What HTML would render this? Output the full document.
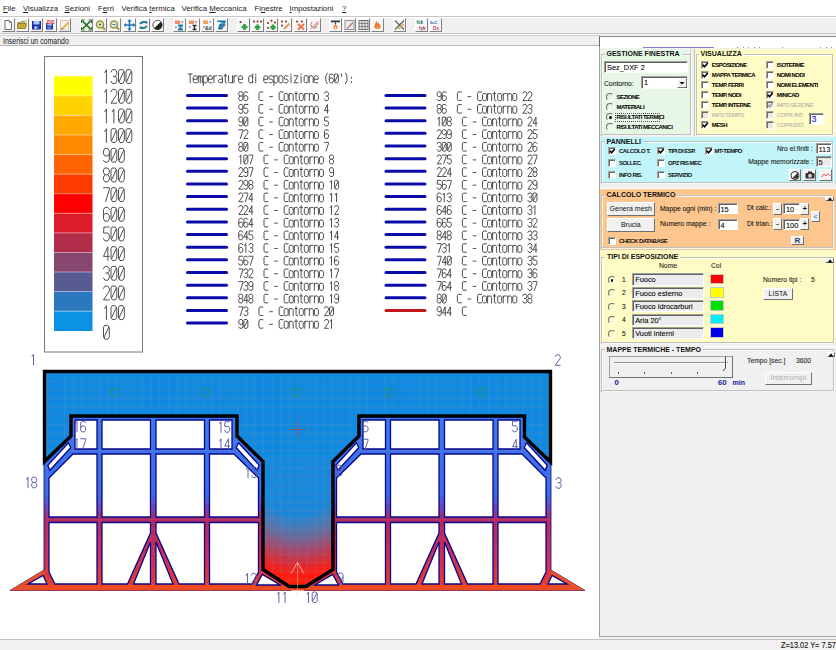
<!DOCTYPE html>
<html><head><meta charset="utf-8"><style>
*{margin:0;padding:0;box-sizing:border-box}
html,body{width:836px;height:650px;overflow:hidden;background:#f0f0f0;font-family:"Liberation Sans",sans-serif;position:relative}
.a{position:absolute}
#menubar{left:0;top:0;width:836px;height:17px;background:#fff;border-bottom:1px solid #c8c8c8}
.mi{position:absolute;top:3.5px;font-size:7.8px;color:#222;white-space:nowrap}
.mi u{text-decoration:underline}
#toolbar{left:0;top:17px;width:836px;height:17px;background:#f0f0f0;border-top:1px solid #fff;border-bottom:1px solid #c4c4c4}
.tb{position:absolute;top:-0.5px;width:13px;height:14px;background:#f6f6f6;border-right:1px solid #808080;border-bottom:1px solid #808080;border-left:1px solid #fff;border-top:1px solid #fff;overflow:hidden}
#cmd{left:0;top:34px;width:600px;height:12px;background:#f0f0f0;border-top:1px solid #fff;box-shadow:inset 0 1px 0 #d0d0d0;border-bottom:1px solid #b8b8b8}
#cmd span{position:absolute;left:3px;top:2px;font-size:8.2px;line-height:10px;color:#111;transform:scaleX(0.85);transform-origin:left center;white-space:nowrap}
#canvas{left:0;top:0;width:599px;height:639px}
#status{left:0;top:639px;width:836px;height:11px;background:#f3f1f1;border-top:1px solid #c4c4c4}
#rp{left:599px;top:36px;width:237px;height:601px;background:#f0f0f0;border-left:1px solid #a0a0a0;border-top:1px solid #8a8a8a;border-bottom:1px solid #a8a8a8}

.gb{border:1px solid #c0c0c0;box-shadow:inset 1px 1px 0 rgba(255,255,255,0.8),1px 1px 0 rgba(255,255,255,0.8)}
.gt{font-weight:bold;font-size:7px;line-height:9px;color:#111;padding:0 2px;white-space:nowrap}
.lb{font-size:7.5px;transform:scaleX(0.9);line-height:10px;color:#000;white-space:nowrap;-webkit-text-stroke:0.08px currentColor}
.sb{font-size:6px;line-height:10px;font-weight:bold;color:#000;white-space:nowrap;letter-spacing:-0.52px}
.mb{font-size:7.8px;line-height:10px;font-weight:bold;color:#1a1aa0;white-space:nowrap}
.cb{width:8px;height:8px;border:1px solid;border-color:#a0a0a0 #fff #fff #a0a0a0;box-shadow:inset 1px 1px 0 #6a6a6a}
.rd{width:8px;height:8px;border-radius:50%;border:1px solid;border-color:#707070 #fff #fff #707070;background:transparent}
.tbx{border:1px solid;border-color:#a0a0a0 #fff #fff #a0a0a0;box-shadow:inset 1px 1px 0 #606060;white-space:nowrap;overflow:hidden;-webkit-text-stroke:0.08px currentColor;padding-top:1px}
.btn{background:#f0f0f0;border:1px solid;border-color:#fff #707070 #707070 #fff;text-align:center;white-space:nowrap;overflow:hidden}
</style></head><body>
<div id="menubar" class="a">
<span class="mi" style="left:3px"><u>F</u>ile</span>
<span class="mi" style="left:23px"><u>V</u>isualizza</span>
<span class="mi" style="left:64.5px"><u>S</u>ezioni</span>
<span class="mi" style="left:98px">F<u>e</u>rri</span>
<span class="mi" style="left:121.5px">Verifica <u>t</u>ermica</span>
<span class="mi" style="left:181.5px">Verifica <u>M</u>eccanica</span>
<span class="mi" style="left:254.5px">Fi<u>n</u>estre</span>
<span class="mi" style="left:289.5px"><u>I</u>mpostazioni</span>
<span class="mi" style="left:342px"><u>?</u></span>
</div>
<div id="toolbar" class="a">
<div class="tb" style="left:1.5px"><svg width="13" height="14" viewBox="0 0 13 14" style="position:absolute;left:-1px;top:-1px"><path d="M3 2.5H7.5L9.5 4.5V11.5H3Z" fill="#fff" stroke="#6a6a6a" stroke-width="1"/><path d="M7.5 2.5V4.5H9.5" fill="none" stroke="#8a8a8a"/></svg></div>
<div class="tb" style="left:15.7px"><svg width="13" height="14" viewBox="0 0 13 14" style="position:absolute;left:-1px;top:-1px"><path d="M1.5 4.5H4.5L5.5 3.5H8.5V5.5" fill="#d8c070" stroke="#908030" stroke-width="0.8"/><path d="M1.5 5.5H10.5L9.5 10.5H1.5Z" fill="#c8a838" stroke="#8a7020" stroke-width="0.8"/><path d="M9 2L11 3.5" stroke="#9090a0" stroke-width="0.8"/></svg></div>
<div class="tb" style="left:29.9px"><svg width="13" height="14" viewBox="0 0 13 14" style="position:absolute;left:-1px;top:-1px"><rect x="2" y="3" width="9" height="8.5" fill="#1c2c9a"/><rect x="3.5" y="3" width="6" height="3.5" fill="#a8c8ff"/><rect x="4" y="8" width="4.5" height="3.5" fill="#5070d0"/><rect x="4.8" y="8.8" width="1.5" height="2" fill="#fff"/></svg></div>
<div class="tb" style="left:44.1px"><svg width="13" height="14" viewBox="0 0 13 14" style="position:absolute;left:-1px;top:-1px"><rect x="2" y="5" width="7" height="6.5" fill="#2a3a9a"/><rect x="3.2" y="5" width="4.6" height="2.5" fill="#a8c8ff"/><rect x="3.5" y="8.5" width="3.5" height="3" fill="#6080d0"/><text x="3" y="5.5" font-size="5.5" font-weight="bold" fill="#e03030" font-family="Liberation Sans">DS</text></svg></div>
<div class="tb" style="left:58.3px"><svg width="13" height="14" viewBox="0 0 13 14" style="position:absolute;left:-1px;top:-1px"><rect x="2.5" y="2.5" width="8" height="9.5" fill="#f8f4e8" stroke="#c8c0b0" stroke-width="0.8"/><path d="M4 11L10.5 4.5" stroke="#d8b850" stroke-width="2.2"/><path d="M3.5 11.5L4.5 10" stroke="#605030" stroke-width="1"/></svg></div>
<div class="tb" style="left:80px"><svg width="13" height="14" viewBox="0 0 13 14" style="position:absolute;left:-1px;top:-1px"><path d="M2.5 3L10.5 11M10.5 3L2.5 11" stroke="#1e6a1e" stroke-width="1.7"/><path d="M1.5 2V5M1.5 2H4.5M11.5 2V5M11.5 2H8.5M1.5 12V9M1.5 12H4.5M11.5 12V9M11.5 12H8.5" stroke="#2a7a2a" stroke-width="1"/></svg></div>
<div class="tb" style="left:94.2px"><svg width="13" height="14" viewBox="0 0 13 14" style="position:absolute;left:-1px;top:-1px"><circle cx="6" cy="6.5" r="3.5" fill="#e8e8c0" stroke="#9a9a3a" stroke-width="1.6"/><path d="M8.6 9.2L11 11.8" stroke="#9a9a3a" stroke-width="2"/><circle cx="6" cy="6.5" r="1" fill="#304090"/></svg></div>
<div class="tb" style="left:108.4px"><svg width="13" height="14" viewBox="0 0 13 14" style="position:absolute;left:-1px;top:-1px"><circle cx="6" cy="6.5" r="3.5" fill="#e8e8d0" stroke="#9a9a4a" stroke-width="1.6"/><path d="M8.6 9.2L11 11.8" stroke="#9a9a4a" stroke-width="2"/><path d="M4.5 6.5H7.5" stroke="#3a7a9a" stroke-width="1"/></svg></div>
<div class="tb" style="left:122.6px"><svg width="13" height="14" viewBox="0 0 13 14" style="position:absolute;left:-1px;top:-1px"><path d="M6.5 2V12M1.5 7H11.5" stroke="#1e78b8" stroke-width="1.6"/><path d="M6.5 1L4.5 3.5H8.5ZM6.5 13L4.5 10.5H8.5ZM0.5 7L3 5V9ZM12.5 7L10 5V9Z" fill="#1e78b8"/></svg></div>
<div class="tb" style="left:136.8px"><svg width="13" height="14" viewBox="0 0 13 14" style="position:absolute;left:-1px;top:-1px"><path d="M3 6Q5 3 10 4.5M10 8Q8 11 3 9.5" stroke="#1a7a8a" stroke-width="1.8" fill="none"/><path d="M9 2.5L11 5L8 5.5ZM4 11.5L2 9L5 8.5Z" fill="#1a7a8a"/></svg></div>
<div class="tb" style="left:151px"><svg width="13" height="14" viewBox="0 0 13 14" style="position:absolute;left:-1px;top:-1px"><circle cx="6.5" cy="7" r="4.6" fill="#fff" stroke="#404040" stroke-width="0.9"/><path d="M3.2 10.3L9.8 3.7A4.6 4.6 0 0 1 3.2 10.3Z" fill="#202020"/></svg></div>
<div class="tb" style="left:172.6px"><svg width="13" height="14" viewBox="0 0 13 14" style="position:absolute;left:-1px;top:-1px"><rect x="2" y="2.5" width="5" height="3.5" fill="#f09060"/><circle cx="9" cy="4" r="0.8" fill="#6040a0"/><circle cx="3" cy="9" r="0.8" fill="#6040a0"/><path d="M5 7.5H10M5 11.5H10M7.5 7.5V11.5" stroke="#2080a0" stroke-width="2"/></svg></div>
<div class="tb" style="left:186.8px"><svg width="13" height="14" viewBox="0 0 13 14" style="position:absolute;left:-1px;top:-1px"><rect x="2" y="2.5" width="5" height="3.5" fill="#f09060"/><circle cx="9" cy="4" r="0.8" fill="#6040a0"/><circle cx="3" cy="9" r="0.8" fill="#6040a0"/><path d="M5.5 7.5H9.5M5.5 11.5H9.5M7.5 7.5V11.5" stroke="#303030" stroke-width="1.5"/></svg></div>
<div class="tb" style="left:201px"><svg width="13" height="14" viewBox="0 0 13 14" style="position:absolute;left:-1px;top:-1px"><rect x="2" y="2.5" width="5" height="3.5" fill="#f0a060"/><circle cx="9" cy="4" r="0.8" fill="#6040a0"/><circle cx="3" cy="9" r="0.8" fill="#6040a0"/><text x="4" y="11.5" font-size="5" font-weight="bold" fill="#304050" font-family="Liberation Sans">&amp;d</text></svg></div>
<div class="tb" style="left:215.2px"><svg width="13" height="14" viewBox="0 0 13 14" style="position:absolute;left:-1px;top:-1px"><path d="M2 3H10.5L9 6H5L3.5 11H7L10 6" fill="#1a88c0" stroke="#1070a0" stroke-width="1"/><path d="M7 10L10.5 7" stroke="#c08080" stroke-width="1.2"/></svg></div>
<div class="tb" style="left:236.7px"><svg width="13" height="14" viewBox="0 0 13 14" style="position:absolute;left:-1px;top:-1px"><circle cx="3.5" cy="4" r="1" fill="#802020"/><path d="M7.5 6V12M4.5 9H10.5" stroke="#30a040" stroke-width="2.6"/></svg></div>
<div class="tb" style="left:250.9px"><svg width="13" height="14" viewBox="0 0 13 14" style="position:absolute;left:-1px;top:-1px"><circle cx="3" cy="3.5" r="1" fill="#902020"/><circle cx="6.5" cy="3.5" r="1" fill="#902020"/><circle cx="10" cy="3.5" r="1" fill="#902020"/><path d="M6.5 6.5V12M3.8 9.2H9.2" stroke="#30a040" stroke-width="2.6"/></svg></div>
<div class="tb" style="left:265.1px"><svg width="13" height="14" viewBox="0 0 13 14" style="position:absolute;left:-1px;top:-1px"><circle cx="3" cy="5" r="1" fill="#902020"/><circle cx="6.5" cy="2.8" r="1" fill="#902020"/><circle cx="10" cy="4.5" r="1" fill="#902020"/><circle cx="3" cy="10" r="1" fill="#902020"/><path d="M8 6.5V12M5.3 9.2H10.7" stroke="#30a040" stroke-width="2.6"/></svg></div>
<div class="tb" style="left:279.3px"><svg width="13" height="14" viewBox="0 0 13 14" style="position:absolute;left:-1px;top:-1px"><circle cx="3" cy="3.5" r="1" fill="#902020"/><circle cx="7" cy="3.5" r="1" fill="#902020"/><circle cx="3" cy="7.5" r="1" fill="#902020"/><path d="M5 11L10.5 5.5" stroke="#d8a870" stroke-width="2.4"/></svg></div>
<div class="tb" style="left:293.5px"><svg width="13" height="14" viewBox="0 0 13 14" style="position:absolute;left:-1px;top:-1px"><circle cx="3" cy="3.5" r="1" fill="#902020"/><circle cx="8" cy="3.5" r="1" fill="#902020"/><path d="M4 6L10 11.5M10 6L4 11.5" stroke="#f07050" stroke-width="2"/></svg></div>
<div class="tb" style="left:307.7px"><svg width="13" height="14" viewBox="0 0 13 14" style="position:absolute;left:-1px;top:-1px"><path d="M2.5 11L10.5 3M4 4A3 3 0 1 0 9 9" stroke="#c07090" stroke-width="1" fill="none"/><path d="M5 10.5L10.5 5" stroke="#d8b090" stroke-width="1.8"/></svg></div>
<div class="tb" style="left:328.6px"><svg width="13" height="14" viewBox="0 0 13 14" style="position:absolute;left:-1px;top:-1px"><rect x="2" y="2.5" width="9" height="1.8" fill="#303850"/><path d="M6.5 4.3V6.5" stroke="#303850" stroke-width="1"/><path d="M6.5 6.5C4 7.5 3.5 11.5 6.5 11.5C9.5 11.5 9 7.5 6.5 6.5Z" fill="#f07030"/><circle cx="6.5" cy="9.8" r="1.2" fill="#ffe0a0"/></svg></div>
<div class="tb" style="left:342.8px"><svg width="13" height="14" viewBox="0 0 13 14" style="position:absolute;left:-1px;top:-1px"><rect x="2" y="2.5" width="9" height="9" fill="#f4ecec" stroke="#909090" stroke-width="1"/><path d="M4 10.5L10 4.5" stroke="#c08080" stroke-width="1.6"/></svg></div>
<div class="tb" style="left:357px"><svg width="13" height="14" viewBox="0 0 13 14" style="position:absolute;left:-1px;top:-1px"><rect x="2" y="2.5" width="9" height="9" fill="#e8e8e8" stroke="#707070" stroke-width="1"/><path d="M5 2.5V11.5M8 2.5V11.5M2 5.5H11M2 8.5H11" stroke="#707070" stroke-width="0.8"/></svg></div>
<div class="tb" style="left:371.2px"><svg width="13" height="14" viewBox="0 0 13 14" style="position:absolute;left:-1px;top:-1px"><path d="M6.5 2.5C4 5 3 7.5 3.5 9.5C4 11.5 9 11.5 9.5 9.5C10 7.5 8 6 7.5 4.5C7 6 6 6.5 6.5 2.5Z" fill="#f07828"/><path d="M6.5 8C5.5 9 5.5 10.5 6.5 10.8C7.5 10.5 7.5 9 6.5 8Z" fill="#ffd080"/></svg></div>
<div class="tb" style="left:392.5px"><svg width="13" height="14" viewBox="0 0 13 14" style="position:absolute;left:-1px;top:-1px"><path d="M2 2.5L11 11.5M11 2.5L2 11.5" stroke="#5a6a5a" stroke-width="1.2"/><path d="M5.5 11L10.5 6" stroke="#d8b070" stroke-width="1.8"/></svg></div>
<div class="tb" style="left:415px"><svg width="13" height="14" viewBox="0 0 13 14" style="position:absolute;left:-1px;top:-1px"><text x="1.5" y="6" font-size="4.6" fill="#207060" font-family="Liberation Sans" font-weight="bold">fck</text><text x="4" y="12" font-size="4.6" fill="#b03060" font-family="Liberation Sans" font-weight="bold">fyk</text></svg></div>
<div class="tb" style="left:429.2px"><svg width="13" height="14" viewBox="0 0 13 14" style="position:absolute;left:-1px;top:-1px"><text x="0.5" y="6" font-size="4.4" fill="#3060a0" font-family="Liberation Sans" font-weight="bold">3cC</text><text x="4" y="12" font-size="4.8" fill="#c05070" font-family="Liberation Sans" font-weight="bold">Ds</text></svg></div>
</div>
<div id="cmd" class="a"><span>Inserisci un comando</span></div>
<svg id="canvas" class="a" width="599" height="639" viewBox="0 0 599 639">
<defs>
<pattern id="grid" x="3.6" y="0.2" width="8.65" height="8.65" patternUnits="userSpaceOnUse"><path d="M0 0H8.65M0 0V8.65" stroke="#b08098" stroke-width="0.9" stroke-opacity="0.42" fill="none"/></pattern>
<radialGradient id="stemg" cx="298" cy="440" r="150" gradientUnits="userSpaceOnUse" gradientTransform="translate(298 0) scale(0.8 1) translate(-298 0)"><stop offset="0" stop-color="#108ae0"/><stop offset="0.5" stop-color="#1a88d8"/><stop offset="0.587" stop-color="#4a7ab8"/><stop offset="0.653" stop-color="#6a6a98"/><stop offset="0.72" stop-color="#985078"/><stop offset="0.787" stop-color="#c03a50"/><stop offset="0.84" stop-color="#e02a30"/><stop offset="0.907" stop-color="#ff1a10"/><stop offset="1" stop-color="#ff2400"/></radialGradient>
<linearGradient id="beamg" x1="0" y1="417" x2="0" y2="590" gradientUnits="userSpaceOnUse"><stop offset="0" stop-color="#3a7af0"/><stop offset="0.45" stop-color="#3a6ae8"/><stop offset="0.53" stop-color="#7040b0"/><stop offset="0.59" stop-color="#b02860"/><stop offset="0.8" stop-color="#cc2c54"/><stop offset="1" stop-color="#ec3c24"/></linearGradient>
</defs>
<rect x="0" y="46" width="599" height="593" fill="#fff"/>
<rect x="44.5" y="56.5" width="98" height="295.5" fill="#fff" stroke="#7a7a7a" stroke-width="1"/>
<rect x="54" y="76.3" width="38.5" height="19.87" fill="#ffff00"/>
<rect x="54" y="95.87" width="38.5" height="19.87" fill="#ffd200"/>
<rect x="54" y="115.44" width="38.5" height="19.87" fill="#ffa800"/>
<rect x="54" y="135.01" width="38.5" height="19.87" fill="#ff8a00"/>
<rect x="54" y="154.58" width="38.5" height="19.87" fill="#ff6400"/>
<rect x="54" y="174.15" width="38.5" height="19.87" fill="#ff3c00"/>
<rect x="54" y="193.72" width="38.5" height="19.87" fill="#ff0000"/>
<rect x="54" y="213.29" width="38.5" height="19.87" fill="#dc1c2a"/>
<rect x="54" y="232.86" width="38.5" height="19.87" fill="#b02c48"/>
<rect x="54" y="252.43" width="38.5" height="19.87" fill="#86466e"/>
<rect x="54" y="272" width="38.5" height="19.87" fill="#585a92"/>
<rect x="54" y="291.57" width="38.5" height="19.87" fill="#2c78be"/>
<rect x="54" y="311.14" width="38.5" height="19.87" fill="#0c92e2"/>
<rect x="54" y="95.37" width="38.5" height="1" fill="#fff" fill-opacity="0.45"/>
<rect x="54" y="114.94" width="38.5" height="1" fill="#fff" fill-opacity="0.45"/>
<rect x="54" y="134.51" width="38.5" height="1" fill="#fff" fill-opacity="0.45"/>
<rect x="54" y="154.08" width="38.5" height="1" fill="#fff" fill-opacity="0.45"/>
<rect x="54" y="173.65" width="38.5" height="1" fill="#fff" fill-opacity="0.45"/>
<rect x="54" y="193.22" width="38.5" height="1" fill="#fff" fill-opacity="0.45"/>
<rect x="54" y="212.79" width="38.5" height="1" fill="#fff" fill-opacity="0.45"/>
<rect x="54" y="232.36" width="38.5" height="1" fill="#fff" fill-opacity="0.45"/>
<rect x="54" y="251.93" width="38.5" height="1" fill="#fff" fill-opacity="0.45"/>
<rect x="54" y="271.5" width="38.5" height="1" fill="#fff" fill-opacity="0.45"/>
<rect x="54" y="291.07" width="38.5" height="1" fill="#fff" fill-opacity="0.45"/>
<rect x="54" y="310.64" width="38.5" height="1" fill="#fff" fill-opacity="0.45"/>
<path d="M104.66 72.46L106.4 69.7L106.4 83.5M111 72L112.45 69.7L115.35 69.7L116.8 72L116.8 74.3L115.35 76.37L113.32 76.37M115.35 76.37L116.8 78.67L116.8 81.2L115.35 83.5L112.45 83.5L111 81.2M119.95 69.7L122.85 69.7L124.3 72L124.3 81.2L122.85 83.5L119.95 83.5L118.5 81.2L118.5 72ZM123.72 71.54L119.08 81.66M127.45 69.7L130.35 69.7L131.8 72L131.8 81.2L130.35 83.5L127.45 83.5L126 81.2L126 72ZM131.22 71.54L126.58 81.66" fill="none" stroke="#505050" stroke-width="1" stroke-linejoin="round" stroke-linecap="round"/>
<path d="M104.66 92.13L106.4 89.37L106.4 103.17M111 91.67L112.45 89.37L115.35 89.37L116.8 91.67L116.8 94.43L111 103.17L116.8 103.17M119.95 89.37L122.85 89.37L124.3 91.67L124.3 100.87L122.85 103.17L119.95 103.17L118.5 100.87L118.5 91.67ZM123.72 91.21L119.08 101.33M127.45 89.37L130.35 89.37L131.8 91.67L131.8 100.87L130.35 103.17L127.45 103.17L126 100.87L126 91.67ZM131.22 91.21L126.58 101.33" fill="none" stroke="#505050" stroke-width="1" stroke-linejoin="round" stroke-linecap="round"/>
<path d="M104.66 111.8L106.4 109.04L106.4 122.84M112.16 111.8L113.9 109.04L113.9 122.84M119.95 109.04L122.85 109.04L124.3 111.34L124.3 120.54L122.85 122.84L119.95 122.84L118.5 120.54L118.5 111.34ZM123.72 110.88L119.08 121M127.45 109.04L130.35 109.04L131.8 111.34L131.8 120.54L130.35 122.84L127.45 122.84L126 120.54L126 111.34ZM131.22 110.88L126.58 121" fill="none" stroke="#505050" stroke-width="1" stroke-linejoin="round" stroke-linecap="round"/>
<path d="M104.66 131.47L106.4 128.71L106.4 142.51M112.45 128.71L115.35 128.71L116.8 131.01L116.8 140.21L115.35 142.51L112.45 142.51L111 140.21L111 131.01ZM116.22 130.55L111.58 140.67M119.95 128.71L122.85 128.71L124.3 131.01L124.3 140.21L122.85 142.51L119.95 142.51L118.5 140.21L118.5 131.01ZM123.72 130.55L119.08 140.67M127.45 128.71L130.35 128.71L131.8 131.01L131.8 140.21L130.35 142.51L127.45 142.51L126 140.21L126 131.01ZM131.22 130.55L126.58 140.67" fill="none" stroke="#505050" stroke-width="1" stroke-linejoin="round" stroke-linecap="round"/>
<path d="M103.5 160.34L104.95 162.18L107.85 162.18L109.3 159.88L109.3 150.68L107.85 148.38L104.95 148.38L103.5 150.68L103.5 153.9L104.95 155.97L107.85 155.97L109.3 153.9M112.45 148.38L115.35 148.38L116.8 150.68L116.8 159.88L115.35 162.18L112.45 162.18L111 159.88L111 150.68ZM116.22 150.22L111.58 160.34M119.95 148.38L122.85 148.38L124.3 150.68L124.3 159.88L122.85 162.18L119.95 162.18L118.5 159.88L118.5 150.68ZM123.72 150.22L119.08 160.34" fill="none" stroke="#505050" stroke-width="1" stroke-linejoin="round" stroke-linecap="round"/>
<path d="M104.95 168.05L107.85 168.05L109.3 170.35L109.3 172.65L107.85 174.72L104.95 174.72L103.5 172.65L103.5 170.35ZM104.95 174.72L103.5 177.02L103.5 179.55L104.95 181.85L107.85 181.85L109.3 179.55L109.3 177.02L107.85 174.72M112.45 168.05L115.35 168.05L116.8 170.35L116.8 179.55L115.35 181.85L112.45 181.85L111 179.55L111 170.35ZM116.22 169.89L111.58 180.01M119.95 168.05L122.85 168.05L124.3 170.35L124.3 179.55L122.85 181.85L119.95 181.85L118.5 179.55L118.5 170.35ZM123.72 169.89L119.08 180.01" fill="none" stroke="#505050" stroke-width="1" stroke-linejoin="round" stroke-linecap="round"/>
<path d="M103.5 187.72L109.3 187.72L109.3 189.56L105.67 201.52M112.45 187.72L115.35 187.72L116.8 190.02L116.8 199.22L115.35 201.52L112.45 201.52L111 199.22L111 190.02ZM116.22 189.56L111.58 199.68M119.95 187.72L122.85 187.72L124.3 190.02L124.3 199.22L122.85 201.52L119.95 201.52L118.5 199.22L118.5 190.02ZM123.72 189.56L119.08 199.68" fill="none" stroke="#505050" stroke-width="1" stroke-linejoin="round" stroke-linecap="round"/>
<path d="M109.3 209.23L107.85 207.39L104.95 207.39L103.5 209.69L103.5 218.89L104.95 221.19L107.85 221.19L109.3 218.89L109.3 215.67L107.85 213.6L104.95 213.6L103.5 215.67M112.45 207.39L115.35 207.39L116.8 209.69L116.8 218.89L115.35 221.19L112.45 221.19L111 218.89L111 209.69ZM116.22 209.23L111.58 219.35M119.95 207.39L122.85 207.39L124.3 209.69L124.3 218.89L122.85 221.19L119.95 221.19L118.5 218.89L118.5 209.69ZM123.72 209.23L119.08 219.35" fill="none" stroke="#505050" stroke-width="1" stroke-linejoin="round" stroke-linecap="round"/>
<path d="M109.3 227.06L103.94 227.06L103.5 233.04L107.85 233.04L109.3 235.34L109.3 238.56L107.85 240.86L104.95 240.86L103.5 238.56M112.45 227.06L115.35 227.06L116.8 229.36L116.8 238.56L115.35 240.86L112.45 240.86L111 238.56L111 229.36ZM116.22 228.9L111.58 239.02M119.95 227.06L122.85 227.06L124.3 229.36L124.3 238.56L122.85 240.86L119.95 240.86L118.5 238.56L118.5 229.36ZM123.72 228.9L119.08 239.02" fill="none" stroke="#505050" stroke-width="1" stroke-linejoin="round" stroke-linecap="round"/>
<path d="M107.85 260.53L107.85 246.73L103.5 256.39L109.3 256.39M112.45 246.73L115.35 246.73L116.8 249.03L116.8 258.23L115.35 260.53L112.45 260.53L111 258.23L111 249.03ZM116.22 248.57L111.58 258.69M119.95 246.73L122.85 246.73L124.3 249.03L124.3 258.23L122.85 260.53L119.95 260.53L118.5 258.23L118.5 249.03ZM123.72 248.57L119.08 258.69" fill="none" stroke="#505050" stroke-width="1" stroke-linejoin="round" stroke-linecap="round"/>
<path d="M103.5 268.7L104.95 266.4L107.85 266.4L109.3 268.7L109.3 271L107.85 273.07L105.82 273.07M107.85 273.07L109.3 275.37L109.3 277.9L107.85 280.2L104.95 280.2L103.5 277.9M112.45 266.4L115.35 266.4L116.8 268.7L116.8 277.9L115.35 280.2L112.45 280.2L111 277.9L111 268.7ZM116.22 268.24L111.58 278.36M119.95 266.4L122.85 266.4L124.3 268.7L124.3 277.9L122.85 280.2L119.95 280.2L118.5 277.9L118.5 268.7ZM123.72 268.24L119.08 278.36" fill="none" stroke="#505050" stroke-width="1" stroke-linejoin="round" stroke-linecap="round"/>
<path d="M103.5 288.37L104.95 286.07L107.85 286.07L109.3 288.37L109.3 291.13L103.5 299.87L109.3 299.87M112.45 286.07L115.35 286.07L116.8 288.37L116.8 297.57L115.35 299.87L112.45 299.87L111 297.57L111 288.37ZM116.22 287.91L111.58 298.03M119.95 286.07L122.85 286.07L124.3 288.37L124.3 297.57L122.85 299.87L119.95 299.87L118.5 297.57L118.5 288.37ZM123.72 287.91L119.08 298.03" fill="none" stroke="#505050" stroke-width="1" stroke-linejoin="round" stroke-linecap="round"/>
<path d="M104.66 308.5L106.4 305.74L106.4 319.54M112.45 305.74L115.35 305.74L116.8 308.04L116.8 317.24L115.35 319.54L112.45 319.54L111 317.24L111 308.04ZM116.22 307.58L111.58 317.7M119.95 305.74L122.85 305.74L124.3 308.04L124.3 317.24L122.85 319.54L119.95 319.54L118.5 317.24L118.5 308.04ZM123.72 307.58L119.08 317.7" fill="none" stroke="#505050" stroke-width="1" stroke-linejoin="round" stroke-linecap="round"/>
<path d="M104.95 325.41L107.85 325.41L109.3 327.71L109.3 336.91L107.85 339.21L104.95 339.21L103.5 336.91L103.5 327.71ZM108.72 327.25L104.08 337.37" fill="none" stroke="#505050" stroke-width="1" stroke-linejoin="round" stroke-linecap="round"/>
<path d="M188.2 74L192.2 74M190.2 74L190.2 82.8M193.24 79.28L197.24 79.28L197.24 77.23L196.24 75.76L194.24 75.76L193.24 77.23L193.24 81.33L194.24 82.8L196.84 82.8M198.28 82.8L198.28 75.76M198.28 76.93L199.08 75.76L199.48 75.76L200.28 76.93L200.28 82.8M200.28 76.93L201.08 75.76L201.48 75.76L202.28 76.93L202.28 82.8M203.32 85.44L203.32 75.76M203.32 77.23L204.32 75.76L206.32 75.76L207.32 77.23L207.32 81.33L206.32 82.8L204.32 82.8L203.32 81.33M208.36 79.28L212.36 79.28L212.36 77.23L211.36 75.76L209.36 75.76L208.36 77.23L208.36 81.33L209.36 82.8L211.96 82.8M213.9 82.8L213.9 75.76M213.9 77.23L214.9 75.76L216.9 75.76M218.94 75.76L221.44 75.76L222.44 77.23L222.44 82.8M222.44 79.13L219.44 79.13L218.44 80.31L218.44 81.63L219.44 82.8L221.44 82.8L222.44 81.33M225.28 74L225.28 81.92L225.88 82.8L226.88 82.8M224.08 75.76L226.68 75.76M228.52 75.76L228.52 81.33L229.52 82.8L231.52 82.8L232.52 81.33M232.52 75.76L232.52 82.8M234.06 82.8L234.06 75.76M234.06 77.23L235.06 75.76L237.06 75.76M238.6 79.28L242.6 79.28L242.6 77.23L241.6 75.76L239.6 75.76L238.6 77.23L238.6 81.33L239.6 82.8L242.2 82.8M252.68 74L252.68 82.8M252.68 77.23L251.68 75.76L249.68 75.76L248.68 77.23L248.68 81.33L249.68 82.8L251.68 82.8L252.68 81.33M255.72 76.64L255.72 82.8M255.72 74L255.72 74.88M263.8 79.28L267.8 79.28L267.8 77.23L266.8 75.76L264.8 75.76L263.8 77.23L263.8 81.33L264.8 82.8L267.4 82.8M272.84 76.35L271.84 75.76L269.84 75.76L268.84 76.93L268.84 78.25L269.84 79.13L271.84 79.13L272.84 80.16L272.84 81.63L271.84 82.8L269.84 82.8L268.84 82.21M273.88 85.44L273.88 75.76M273.88 77.23L274.88 75.76L276.88 75.76L277.88 77.23L277.88 81.33L276.88 82.8L274.88 82.8L273.88 81.33M279.92 75.76L281.92 75.76L282.92 77.23L282.92 81.33L281.92 82.8L279.92 82.8L278.92 81.33L278.92 77.23ZM287.96 76.35L286.96 75.76L284.96 75.76L283.96 76.93L283.96 78.25L284.96 79.13L286.96 79.13L287.96 80.16L287.96 81.63L286.96 82.8L284.96 82.8L283.96 82.21M291 76.64L291 82.8M291 74L291 74.88M294.04 75.76L298.04 75.76L294.04 82.8L298.04 82.8M301.08 76.64L301.08 82.8M301.08 74L301.08 74.88M305.12 75.76L307.12 75.76L308.12 77.23L308.12 81.33L307.12 82.8L305.12 82.8L304.12 81.33L304.12 77.23ZM309.16 82.8L309.16 75.76M309.16 77.23L310.16 75.76L312.16 75.76L313.16 77.23L313.16 82.8M314.2 79.28L318.2 79.28L318.2 77.23L317.2 75.76L315.2 75.76L314.2 77.23L314.2 81.33L315.2 82.8L317.8 82.8M327.28 73.12L325.78 76.05L325.78 80.75L327.28 83.68M333.32 75.17L332.32 74L330.32 74L329.32 75.47L329.32 81.33L330.32 82.8L332.32 82.8L333.32 81.33L333.32 79.28L332.32 77.96L330.32 77.96L329.32 79.28M335.36 74L337.36 74L338.36 75.47L338.36 81.33L337.36 82.8L335.36 82.8L334.36 81.33L334.36 75.47ZM337.96 75.17L334.76 81.63M341.4 74L341.4 76.35M345.44 73.12L346.94 76.05L346.94 80.75L345.44 83.68M351.48 77.23L351.48 78.25M351.48 81.63L351.48 82.65" fill="none" stroke="#3c3c3c" stroke-width="0.9" stroke-linejoin="round" stroke-linecap="round"/>
<line x1="187.5" y1="95.4" x2="226.5" y2="95.4" stroke="#0a0aa8" stroke-width="3" stroke-linecap="round"/>
<path d="M239.8 91.8L241.8 91.8L242.8 93.27L242.8 94.73L241.8 96.05L239.8 96.05L238.8 94.73L238.8 93.27ZM239.8 96.05L238.8 97.52L238.8 99.13L239.8 100.6L241.8 100.6L242.8 99.13L242.8 97.52L241.8 96.05M247.84 92.97L246.84 91.8L244.84 91.8L243.84 93.27L243.84 99.13L244.84 100.6L246.84 100.6L247.84 99.13L247.84 97.08L246.84 95.76L244.84 95.76L243.84 97.08M262.96 92.09L259.96 91.8L258.96 93.27L258.96 99.13L259.96 100.6L262.96 100.31M269.64 96.64L272.44 96.64M283.12 92.09L280.12 91.8L279.12 93.27L279.12 99.13L280.12 100.6L283.12 100.31M285.16 93.56L287.16 93.56L288.16 95.03L288.16 99.13L287.16 100.6L285.16 100.6L284.16 99.13L284.16 95.03ZM289.2 100.6L289.2 93.56M289.2 95.03L290.2 93.56L292.2 93.56L293.2 95.03L293.2 100.6M296.04 91.8L296.04 99.72L296.64 100.6L297.64 100.6M294.84 93.56L297.44 93.56M300.28 93.56L302.28 93.56L303.28 95.03L303.28 99.13L302.28 100.6L300.28 100.6L299.28 99.13L299.28 95.03ZM304.82 100.6L304.82 93.56M304.82 95.03L305.82 93.56L307.82 93.56M309.36 100.6L309.36 93.56M309.36 95.03L310.36 93.56L312.36 93.56L313.36 95.03L313.36 100.6M315.4 93.56L317.4 93.56L318.4 95.03L318.4 99.13L317.4 100.6L315.4 100.6L314.4 99.13L314.4 95.03ZM324.48 93.27L325.48 91.8L327.48 91.8L328.48 93.27L328.48 94.73L327.48 96.05L326.08 96.05M327.48 96.05L328.48 97.52L328.48 99.13L327.48 100.6L325.48 100.6L324.48 99.13" fill="none" stroke="#3c3c3c" stroke-width="0.9" stroke-linejoin="round" stroke-linecap="round"/>
<line x1="187.5" y1="108.05" x2="226.5" y2="108.05" stroke="#0a0aa8" stroke-width="3" stroke-linecap="round"/>
<path d="M238.8 112.08L239.8 113.25L241.8 113.25L242.8 111.78L242.8 105.92L241.8 104.45L239.8 104.45L238.8 105.92L238.8 107.97L239.8 109.29L241.8 109.29L242.8 107.97M247.84 104.45L244.14 104.45L243.84 108.26L246.84 108.26L247.84 109.73L247.84 111.78L246.84 113.25L244.84 113.25L243.84 111.78M262.96 104.74L259.96 104.45L258.96 105.92L258.96 111.78L259.96 113.25L262.96 112.96M269.64 109.29L272.44 109.29M283.12 104.74L280.12 104.45L279.12 105.92L279.12 111.78L280.12 113.25L283.12 112.96M285.16 106.21L287.16 106.21L288.16 107.68L288.16 111.78L287.16 113.25L285.16 113.25L284.16 111.78L284.16 107.68ZM289.2 113.25L289.2 106.21M289.2 107.68L290.2 106.21L292.2 106.21L293.2 107.68L293.2 113.25M296.04 104.45L296.04 112.37L296.64 113.25L297.64 113.25M294.84 106.21L297.44 106.21M300.28 106.21L302.28 106.21L303.28 107.68L303.28 111.78L302.28 113.25L300.28 113.25L299.28 111.78L299.28 107.68ZM304.82 113.25L304.82 106.21M304.82 107.68L305.82 106.21L307.82 106.21M309.36 113.25L309.36 106.21M309.36 107.68L310.36 106.21L312.36 106.21L313.36 107.68L313.36 113.25M315.4 106.21L317.4 106.21L318.4 107.68L318.4 111.78L317.4 113.25L315.4 113.25L314.4 111.78L314.4 107.68ZM327.48 113.25L327.48 104.45L324.48 110.61L328.48 110.61" fill="none" stroke="#3c3c3c" stroke-width="0.9" stroke-linejoin="round" stroke-linecap="round"/>
<line x1="187.5" y1="120.7" x2="226.5" y2="120.7" stroke="#0a0aa8" stroke-width="3" stroke-linecap="round"/>
<path d="M238.8 124.73L239.8 125.9L241.8 125.9L242.8 124.43L242.8 118.57L241.8 117.1L239.8 117.1L238.8 118.57L238.8 120.62L239.8 121.94L241.8 121.94L242.8 120.62M244.84 117.1L246.84 117.1L247.84 118.57L247.84 124.43L246.84 125.9L244.84 125.9L243.84 124.43L243.84 118.57ZM247.44 118.27L244.24 124.73M262.96 117.39L259.96 117.1L258.96 118.57L258.96 124.43L259.96 125.9L262.96 125.61M269.64 121.94L272.44 121.94M283.12 117.39L280.12 117.1L279.12 118.57L279.12 124.43L280.12 125.9L283.12 125.61M285.16 118.86L287.16 118.86L288.16 120.33L288.16 124.43L287.16 125.9L285.16 125.9L284.16 124.43L284.16 120.33ZM289.2 125.9L289.2 118.86M289.2 120.33L290.2 118.86L292.2 118.86L293.2 120.33L293.2 125.9M296.04 117.1L296.04 125.02L296.64 125.9L297.64 125.9M294.84 118.86L297.44 118.86M300.28 118.86L302.28 118.86L303.28 120.33L303.28 124.43L302.28 125.9L300.28 125.9L299.28 124.43L299.28 120.33ZM304.82 125.9L304.82 118.86M304.82 120.33L305.82 118.86L307.82 118.86M309.36 125.9L309.36 118.86M309.36 120.33L310.36 118.86L312.36 118.86L313.36 120.33L313.36 125.9M315.4 118.86L317.4 118.86L318.4 120.33L318.4 124.43L317.4 125.9L315.4 125.9L314.4 124.43L314.4 120.33ZM328.48 117.1L324.78 117.1L324.48 120.91L327.48 120.91L328.48 122.38L328.48 124.43L327.48 125.9L325.48 125.9L324.48 124.43" fill="none" stroke="#3c3c3c" stroke-width="0.9" stroke-linejoin="round" stroke-linecap="round"/>
<line x1="187.5" y1="133.35" x2="226.5" y2="133.35" stroke="#0a0aa8" stroke-width="3" stroke-linecap="round"/>
<path d="M238.8 129.75L242.8 129.75L242.8 130.92L240.3 138.55M243.84 131.22L244.84 129.75L246.84 129.75L247.84 131.22L247.84 132.98L243.84 138.55L247.84 138.55M262.96 130.04L259.96 129.75L258.96 131.22L258.96 137.08L259.96 138.55L262.96 138.26M269.64 134.59L272.44 134.59M283.12 130.04L280.12 129.75L279.12 131.22L279.12 137.08L280.12 138.55L283.12 138.26M285.16 131.51L287.16 131.51L288.16 132.98L288.16 137.08L287.16 138.55L285.16 138.55L284.16 137.08L284.16 132.98ZM289.2 138.55L289.2 131.51M289.2 132.98L290.2 131.51L292.2 131.51L293.2 132.98L293.2 138.55M296.04 129.75L296.04 137.67L296.64 138.55L297.64 138.55M294.84 131.51L297.44 131.51M300.28 131.51L302.28 131.51L303.28 132.98L303.28 137.08L302.28 138.55L300.28 138.55L299.28 137.08L299.28 132.98ZM304.82 138.55L304.82 131.51M304.82 132.98L305.82 131.51L307.82 131.51M309.36 138.55L309.36 131.51M309.36 132.98L310.36 131.51L312.36 131.51L313.36 132.98L313.36 138.55M315.4 131.51L317.4 131.51L318.4 132.98L318.4 137.08L317.4 138.55L315.4 138.55L314.4 137.08L314.4 132.98ZM328.48 130.92L327.48 129.75L325.48 129.75L324.48 131.22L324.48 137.08L325.48 138.55L327.48 138.55L328.48 137.08L328.48 135.03L327.48 133.71L325.48 133.71L324.48 135.03" fill="none" stroke="#3c3c3c" stroke-width="0.9" stroke-linejoin="round" stroke-linecap="round"/>
<line x1="187.5" y1="146" x2="226.5" y2="146" stroke="#0a0aa8" stroke-width="3" stroke-linecap="round"/>
<path d="M239.8 142.4L241.8 142.4L242.8 143.87L242.8 145.33L241.8 146.65L239.8 146.65L238.8 145.33L238.8 143.87ZM239.8 146.65L238.8 148.12L238.8 149.73L239.8 151.2L241.8 151.2L242.8 149.73L242.8 148.12L241.8 146.65M244.84 142.4L246.84 142.4L247.84 143.87L247.84 149.73L246.84 151.2L244.84 151.2L243.84 149.73L243.84 143.87ZM247.44 143.57L244.24 150.03M262.96 142.69L259.96 142.4L258.96 143.87L258.96 149.73L259.96 151.2L262.96 150.91M269.64 147.24L272.44 147.24M283.12 142.69L280.12 142.4L279.12 143.87L279.12 149.73L280.12 151.2L283.12 150.91M285.16 144.16L287.16 144.16L288.16 145.63L288.16 149.73L287.16 151.2L285.16 151.2L284.16 149.73L284.16 145.63ZM289.2 151.2L289.2 144.16M289.2 145.63L290.2 144.16L292.2 144.16L293.2 145.63L293.2 151.2M296.04 142.4L296.04 150.32L296.64 151.2L297.64 151.2M294.84 144.16L297.44 144.16M300.28 144.16L302.28 144.16L303.28 145.63L303.28 149.73L302.28 151.2L300.28 151.2L299.28 149.73L299.28 145.63ZM304.82 151.2L304.82 144.16M304.82 145.63L305.82 144.16L307.82 144.16M309.36 151.2L309.36 144.16M309.36 145.63L310.36 144.16L312.36 144.16L313.36 145.63L313.36 151.2M315.4 144.16L317.4 144.16L318.4 145.63L318.4 149.73L317.4 151.2L315.4 151.2L314.4 149.73L314.4 145.63ZM324.48 142.4L328.48 142.4L328.48 143.57L325.98 151.2" fill="none" stroke="#3c3c3c" stroke-width="0.9" stroke-linejoin="round" stroke-linecap="round"/>
<line x1="187.5" y1="158.65" x2="226.5" y2="158.65" stroke="#0a0aa8" stroke-width="3" stroke-linecap="round"/>
<path d="M239.6 156.81L240.8 155.05L240.8 163.85M244.84 155.05L246.84 155.05L247.84 156.52L247.84 162.38L246.84 163.85L244.84 163.85L243.84 162.38L243.84 156.52ZM247.44 156.22L244.24 162.68M248.88 155.05L252.88 155.05L252.88 156.22L250.38 163.85M268 155.34L265 155.05L264 156.52L264 162.38L265 163.85L268 163.56M274.68 159.89L277.48 159.89M288.16 155.34L285.16 155.05L284.16 156.52L284.16 162.38L285.16 163.85L288.16 163.56M290.2 156.81L292.2 156.81L293.2 158.28L293.2 162.38L292.2 163.85L290.2 163.85L289.2 162.38L289.2 158.28ZM294.24 163.85L294.24 156.81M294.24 158.28L295.24 156.81L297.24 156.81L298.24 158.28L298.24 163.85M301.08 155.05L301.08 162.97L301.68 163.85L302.68 163.85M299.88 156.81L302.48 156.81M305.32 156.81L307.32 156.81L308.32 158.28L308.32 162.38L307.32 163.85L305.32 163.85L304.32 162.38L304.32 158.28ZM309.86 163.85L309.86 156.81M309.86 158.28L310.86 156.81L312.86 156.81M314.4 163.85L314.4 156.81M314.4 158.28L315.4 156.81L317.4 156.81L318.4 158.28L318.4 163.85M320.44 156.81L322.44 156.81L323.44 158.28L323.44 162.38L322.44 163.85L320.44 163.85L319.44 162.38L319.44 158.28ZM330.52 155.05L332.52 155.05L333.52 156.52L333.52 157.98L332.52 159.3L330.52 159.3L329.52 157.98L329.52 156.52ZM330.52 159.3L329.52 160.77L329.52 162.38L330.52 163.85L332.52 163.85L333.52 162.38L333.52 160.77L332.52 159.3" fill="none" stroke="#3c3c3c" stroke-width="0.9" stroke-linejoin="round" stroke-linecap="round"/>
<line x1="187.5" y1="171.3" x2="226.5" y2="171.3" stroke="#0a0aa8" stroke-width="3" stroke-linecap="round"/>
<path d="M238.8 169.17L239.8 167.7L241.8 167.7L242.8 169.17L242.8 170.93L238.8 176.5L242.8 176.5M243.84 175.33L244.84 176.5L246.84 176.5L247.84 175.03L247.84 169.17L246.84 167.7L244.84 167.7L243.84 169.17L243.84 171.22L244.84 172.54L246.84 172.54L247.84 171.22M248.88 167.7L252.88 167.7L252.88 168.87L250.38 176.5M268 167.99L265 167.7L264 169.17L264 175.03L265 176.5L268 176.21M274.68 172.54L277.48 172.54M288.16 167.99L285.16 167.7L284.16 169.17L284.16 175.03L285.16 176.5L288.16 176.21M290.2 169.46L292.2 169.46L293.2 170.93L293.2 175.03L292.2 176.5L290.2 176.5L289.2 175.03L289.2 170.93ZM294.24 176.5L294.24 169.46M294.24 170.93L295.24 169.46L297.24 169.46L298.24 170.93L298.24 176.5M301.08 167.7L301.08 175.62L301.68 176.5L302.68 176.5M299.88 169.46L302.48 169.46M305.32 169.46L307.32 169.46L308.32 170.93L308.32 175.03L307.32 176.5L305.32 176.5L304.32 175.03L304.32 170.93ZM309.86 176.5L309.86 169.46M309.86 170.93L310.86 169.46L312.86 169.46M314.4 176.5L314.4 169.46M314.4 170.93L315.4 169.46L317.4 169.46L318.4 170.93L318.4 176.5M320.44 169.46L322.44 169.46L323.44 170.93L323.44 175.03L322.44 176.5L320.44 176.5L319.44 175.03L319.44 170.93ZM329.52 175.33L330.52 176.5L332.52 176.5L333.52 175.03L333.52 169.17L332.52 167.7L330.52 167.7L329.52 169.17L329.52 171.22L330.52 172.54L332.52 172.54L333.52 171.22" fill="none" stroke="#3c3c3c" stroke-width="0.9" stroke-linejoin="round" stroke-linecap="round"/>
<line x1="187.5" y1="183.95" x2="226.5" y2="183.95" stroke="#0a0aa8" stroke-width="3" stroke-linecap="round"/>
<path d="M238.8 181.82L239.8 180.35L241.8 180.35L242.8 181.82L242.8 183.58L238.8 189.15L242.8 189.15M243.84 187.98L244.84 189.15L246.84 189.15L247.84 187.68L247.84 181.82L246.84 180.35L244.84 180.35L243.84 181.82L243.84 183.87L244.84 185.19L246.84 185.19L247.84 183.87M249.88 180.35L251.88 180.35L252.88 181.82L252.88 183.28L251.88 184.6L249.88 184.6L248.88 183.28L248.88 181.82ZM249.88 184.6L248.88 186.07L248.88 187.68L249.88 189.15L251.88 189.15L252.88 187.68L252.88 186.07L251.88 184.6M268 180.64L265 180.35L264 181.82L264 187.68L265 189.15L268 188.86M274.68 185.19L277.48 185.19M288.16 180.64L285.16 180.35L284.16 181.82L284.16 187.68L285.16 189.15L288.16 188.86M290.2 182.11L292.2 182.11L293.2 183.58L293.2 187.68L292.2 189.15L290.2 189.15L289.2 187.68L289.2 183.58ZM294.24 189.15L294.24 182.11M294.24 183.58L295.24 182.11L297.24 182.11L298.24 183.58L298.24 189.15M301.08 180.35L301.08 188.27L301.68 189.15L302.68 189.15M299.88 182.11L302.48 182.11M305.32 182.11L307.32 182.11L308.32 183.58L308.32 187.68L307.32 189.15L305.32 189.15L304.32 187.68L304.32 183.58ZM309.86 189.15L309.86 182.11M309.86 183.58L310.86 182.11L312.86 182.11M314.4 189.15L314.4 182.11M314.4 183.58L315.4 182.11L317.4 182.11L318.4 183.58L318.4 189.15M320.44 182.11L322.44 182.11L323.44 183.58L323.44 187.68L322.44 189.15L320.44 189.15L319.44 187.68L319.44 183.58ZM330.32 182.11L331.52 180.35L331.52 189.15M335.56 180.35L337.56 180.35L338.56 181.82L338.56 187.68L337.56 189.15L335.56 189.15L334.56 187.68L334.56 181.82ZM338.16 181.52L334.96 187.98" fill="none" stroke="#3c3c3c" stroke-width="0.9" stroke-linejoin="round" stroke-linecap="round"/>
<line x1="187.5" y1="196.6" x2="226.5" y2="196.6" stroke="#0a0aa8" stroke-width="3" stroke-linecap="round"/>
<path d="M238.8 194.47L239.8 193L241.8 193L242.8 194.47L242.8 196.23L238.8 201.8L242.8 201.8M243.84 193L247.84 193L247.84 194.17L245.34 201.8M251.88 201.8L251.88 193L248.88 199.16L252.88 199.16M268 193.29L265 193L264 194.47L264 200.33L265 201.8L268 201.51M274.68 197.84L277.48 197.84M288.16 193.29L285.16 193L284.16 194.47L284.16 200.33L285.16 201.8L288.16 201.51M290.2 194.76L292.2 194.76L293.2 196.23L293.2 200.33L292.2 201.8L290.2 201.8L289.2 200.33L289.2 196.23ZM294.24 201.8L294.24 194.76M294.24 196.23L295.24 194.76L297.24 194.76L298.24 196.23L298.24 201.8M301.08 193L301.08 200.92L301.68 201.8L302.68 201.8M299.88 194.76L302.48 194.76M305.32 194.76L307.32 194.76L308.32 196.23L308.32 200.33L307.32 201.8L305.32 201.8L304.32 200.33L304.32 196.23ZM309.86 201.8L309.86 194.76M309.86 196.23L310.86 194.76L312.86 194.76M314.4 201.8L314.4 194.76M314.4 196.23L315.4 194.76L317.4 194.76L318.4 196.23L318.4 201.8M320.44 194.76L322.44 194.76L323.44 196.23L323.44 200.33L322.44 201.8L320.44 201.8L319.44 200.33L319.44 196.23ZM330.32 194.76L331.52 193L331.52 201.8M335.36 194.76L336.56 193L336.56 201.8" fill="none" stroke="#3c3c3c" stroke-width="0.9" stroke-linejoin="round" stroke-linecap="round"/>
<line x1="187.5" y1="209.25" x2="226.5" y2="209.25" stroke="#0a0aa8" stroke-width="3" stroke-linecap="round"/>
<path d="M238.8 207.12L239.8 205.65L241.8 205.65L242.8 207.12L242.8 208.88L238.8 214.45L242.8 214.45M243.84 207.12L244.84 205.65L246.84 205.65L247.84 207.12L247.84 208.88L243.84 214.45L247.84 214.45M251.88 214.45L251.88 205.65L248.88 211.81L252.88 211.81M268 205.94L265 205.65L264 207.12L264 212.98L265 214.45L268 214.16M274.68 210.49L277.48 210.49M288.16 205.94L285.16 205.65L284.16 207.12L284.16 212.98L285.16 214.45L288.16 214.16M290.2 207.41L292.2 207.41L293.2 208.88L293.2 212.98L292.2 214.45L290.2 214.45L289.2 212.98L289.2 208.88ZM294.24 214.45L294.24 207.41M294.24 208.88L295.24 207.41L297.24 207.41L298.24 208.88L298.24 214.45M301.08 205.65L301.08 213.57L301.68 214.45L302.68 214.45M299.88 207.41L302.48 207.41M305.32 207.41L307.32 207.41L308.32 208.88L308.32 212.98L307.32 214.45L305.32 214.45L304.32 212.98L304.32 208.88ZM309.86 214.45L309.86 207.41M309.86 208.88L310.86 207.41L312.86 207.41M314.4 214.45L314.4 207.41M314.4 208.88L315.4 207.41L317.4 207.41L318.4 208.88L318.4 214.45M320.44 207.41L322.44 207.41L323.44 208.88L323.44 212.98L322.44 214.45L320.44 214.45L319.44 212.98L319.44 208.88ZM330.32 207.41L331.52 205.65L331.52 214.45M334.56 207.12L335.56 205.65L337.56 205.65L338.56 207.12L338.56 208.88L334.56 214.45L338.56 214.45" fill="none" stroke="#3c3c3c" stroke-width="0.9" stroke-linejoin="round" stroke-linecap="round"/>
<line x1="187.5" y1="221.9" x2="226.5" y2="221.9" stroke="#0a0aa8" stroke-width="3" stroke-linecap="round"/>
<path d="M242.8 219.47L241.8 218.3L239.8 218.3L238.8 219.77L238.8 225.63L239.8 227.1L241.8 227.1L242.8 225.63L242.8 223.58L241.8 222.26L239.8 222.26L238.8 223.58M247.84 219.47L246.84 218.3L244.84 218.3L243.84 219.77L243.84 225.63L244.84 227.1L246.84 227.1L247.84 225.63L247.84 223.58L246.84 222.26L244.84 222.26L243.84 223.58M251.88 227.1L251.88 218.3L248.88 224.46L252.88 224.46M268 218.59L265 218.3L264 219.77L264 225.63L265 227.1L268 226.81M274.68 223.14L277.48 223.14M288.16 218.59L285.16 218.3L284.16 219.77L284.16 225.63L285.16 227.1L288.16 226.81M290.2 220.06L292.2 220.06L293.2 221.53L293.2 225.63L292.2 227.1L290.2 227.1L289.2 225.63L289.2 221.53ZM294.24 227.1L294.24 220.06M294.24 221.53L295.24 220.06L297.24 220.06L298.24 221.53L298.24 227.1M301.08 218.3L301.08 226.22L301.68 227.1L302.68 227.1M299.88 220.06L302.48 220.06M305.32 220.06L307.32 220.06L308.32 221.53L308.32 225.63L307.32 227.1L305.32 227.1L304.32 225.63L304.32 221.53ZM309.86 227.1L309.86 220.06M309.86 221.53L310.86 220.06L312.86 220.06M314.4 227.1L314.4 220.06M314.4 221.53L315.4 220.06L317.4 220.06L318.4 221.53L318.4 227.1M320.44 220.06L322.44 220.06L323.44 221.53L323.44 225.63L322.44 227.1L320.44 227.1L319.44 225.63L319.44 221.53ZM330.32 220.06L331.52 218.3L331.52 227.1M334.56 219.77L335.56 218.3L337.56 218.3L338.56 219.77L338.56 221.23L337.56 222.55L336.16 222.55M337.56 222.55L338.56 224.02L338.56 225.63L337.56 227.1L335.56 227.1L334.56 225.63" fill="none" stroke="#3c3c3c" stroke-width="0.9" stroke-linejoin="round" stroke-linecap="round"/>
<line x1="187.5" y1="234.55" x2="226.5" y2="234.55" stroke="#0a0aa8" stroke-width="3" stroke-linecap="round"/>
<path d="M242.8 232.12L241.8 230.95L239.8 230.95L238.8 232.42L238.8 238.28L239.8 239.75L241.8 239.75L242.8 238.28L242.8 236.23L241.8 234.91L239.8 234.91L238.8 236.23M246.84 239.75L246.84 230.95L243.84 237.11L247.84 237.11M252.88 230.95L249.18 230.95L248.88 234.76L251.88 234.76L252.88 236.23L252.88 238.28L251.88 239.75L249.88 239.75L248.88 238.28M268 231.24L265 230.95L264 232.42L264 238.28L265 239.75L268 239.46M274.68 235.79L277.48 235.79M288.16 231.24L285.16 230.95L284.16 232.42L284.16 238.28L285.16 239.75L288.16 239.46M290.2 232.71L292.2 232.71L293.2 234.18L293.2 238.28L292.2 239.75L290.2 239.75L289.2 238.28L289.2 234.18ZM294.24 239.75L294.24 232.71M294.24 234.18L295.24 232.71L297.24 232.71L298.24 234.18L298.24 239.75M301.08 230.95L301.08 238.87L301.68 239.75L302.68 239.75M299.88 232.71L302.48 232.71M305.32 232.71L307.32 232.71L308.32 234.18L308.32 238.28L307.32 239.75L305.32 239.75L304.32 238.28L304.32 234.18ZM309.86 239.75L309.86 232.71M309.86 234.18L310.86 232.71L312.86 232.71M314.4 239.75L314.4 232.71M314.4 234.18L315.4 232.71L317.4 232.71L318.4 234.18L318.4 239.75M320.44 232.71L322.44 232.71L323.44 234.18L323.44 238.28L322.44 239.75L320.44 239.75L319.44 238.28L319.44 234.18ZM330.32 232.71L331.52 230.95L331.52 239.75M337.56 239.75L337.56 230.95L334.56 237.11L338.56 237.11" fill="none" stroke="#3c3c3c" stroke-width="0.9" stroke-linejoin="round" stroke-linecap="round"/>
<line x1="187.5" y1="247.2" x2="226.5" y2="247.2" stroke="#0a0aa8" stroke-width="3" stroke-linecap="round"/>
<path d="M242.8 244.77L241.8 243.6L239.8 243.6L238.8 245.07L238.8 250.93L239.8 252.4L241.8 252.4L242.8 250.93L242.8 248.88L241.8 247.56L239.8 247.56L238.8 248.88M244.64 245.36L245.84 243.6L245.84 252.4M248.88 245.07L249.88 243.6L251.88 243.6L252.88 245.07L252.88 246.53L251.88 247.85L250.48 247.85M251.88 247.85L252.88 249.32L252.88 250.93L251.88 252.4L249.88 252.4L248.88 250.93M268 243.89L265 243.6L264 245.07L264 250.93L265 252.4L268 252.11M274.68 248.44L277.48 248.44M288.16 243.89L285.16 243.6L284.16 245.07L284.16 250.93L285.16 252.4L288.16 252.11M290.2 245.36L292.2 245.36L293.2 246.83L293.2 250.93L292.2 252.4L290.2 252.4L289.2 250.93L289.2 246.83ZM294.24 252.4L294.24 245.36M294.24 246.83L295.24 245.36L297.24 245.36L298.24 246.83L298.24 252.4M301.08 243.6L301.08 251.52L301.68 252.4L302.68 252.4M299.88 245.36L302.48 245.36M305.32 245.36L307.32 245.36L308.32 246.83L308.32 250.93L307.32 252.4L305.32 252.4L304.32 250.93L304.32 246.83ZM309.86 252.4L309.86 245.36M309.86 246.83L310.86 245.36L312.86 245.36M314.4 252.4L314.4 245.36M314.4 246.83L315.4 245.36L317.4 245.36L318.4 246.83L318.4 252.4M320.44 245.36L322.44 245.36L323.44 246.83L323.44 250.93L322.44 252.4L320.44 252.4L319.44 250.93L319.44 246.83ZM330.32 245.36L331.52 243.6L331.52 252.4M338.56 243.6L334.86 243.6L334.56 247.41L337.56 247.41L338.56 248.88L338.56 250.93L337.56 252.4L335.56 252.4L334.56 250.93" fill="none" stroke="#3c3c3c" stroke-width="0.9" stroke-linejoin="round" stroke-linecap="round"/>
<line x1="187.5" y1="259.85" x2="226.5" y2="259.85" stroke="#0a0aa8" stroke-width="3" stroke-linecap="round"/>
<path d="M242.8 256.25L239.1 256.25L238.8 260.06L241.8 260.06L242.8 261.53L242.8 263.58L241.8 265.05L239.8 265.05L238.8 263.58M247.84 257.42L246.84 256.25L244.84 256.25L243.84 257.72L243.84 263.58L244.84 265.05L246.84 265.05L247.84 263.58L247.84 261.53L246.84 260.21L244.84 260.21L243.84 261.53M248.88 256.25L252.88 256.25L252.88 257.42L250.38 265.05M268 256.54L265 256.25L264 257.72L264 263.58L265 265.05L268 264.76M274.68 261.09L277.48 261.09M288.16 256.54L285.16 256.25L284.16 257.72L284.16 263.58L285.16 265.05L288.16 264.76M290.2 258.01L292.2 258.01L293.2 259.48L293.2 263.58L292.2 265.05L290.2 265.05L289.2 263.58L289.2 259.48ZM294.24 265.05L294.24 258.01M294.24 259.48L295.24 258.01L297.24 258.01L298.24 259.48L298.24 265.05M301.08 256.25L301.08 264.17L301.68 265.05L302.68 265.05M299.88 258.01L302.48 258.01M305.32 258.01L307.32 258.01L308.32 259.48L308.32 263.58L307.32 265.05L305.32 265.05L304.32 263.58L304.32 259.48ZM309.86 265.05L309.86 258.01M309.86 259.48L310.86 258.01L312.86 258.01M314.4 265.05L314.4 258.01M314.4 259.48L315.4 258.01L317.4 258.01L318.4 259.48L318.4 265.05M320.44 258.01L322.44 258.01L323.44 259.48L323.44 263.58L322.44 265.05L320.44 265.05L319.44 263.58L319.44 259.48ZM330.32 258.01L331.52 256.25L331.52 265.05M338.56 257.42L337.56 256.25L335.56 256.25L334.56 257.72L334.56 263.58L335.56 265.05L337.56 265.05L338.56 263.58L338.56 261.53L337.56 260.21L335.56 260.21L334.56 261.53" fill="none" stroke="#3c3c3c" stroke-width="0.9" stroke-linejoin="round" stroke-linecap="round"/>
<line x1="187.5" y1="272.5" x2="226.5" y2="272.5" stroke="#0a0aa8" stroke-width="3" stroke-linecap="round"/>
<path d="M238.8 268.9L242.8 268.9L242.8 270.07L240.3 277.7M243.84 270.37L244.84 268.9L246.84 268.9L247.84 270.37L247.84 271.83L246.84 273.15L245.44 273.15M246.84 273.15L247.84 274.62L247.84 276.23L246.84 277.7L244.84 277.7L243.84 276.23M248.88 270.37L249.88 268.9L251.88 268.9L252.88 270.37L252.88 272.13L248.88 277.7L252.88 277.7M268 269.19L265 268.9L264 270.37L264 276.23L265 277.7L268 277.41M274.68 273.74L277.48 273.74M288.16 269.19L285.16 268.9L284.16 270.37L284.16 276.23L285.16 277.7L288.16 277.41M290.2 270.66L292.2 270.66L293.2 272.13L293.2 276.23L292.2 277.7L290.2 277.7L289.2 276.23L289.2 272.13ZM294.24 277.7L294.24 270.66M294.24 272.13L295.24 270.66L297.24 270.66L298.24 272.13L298.24 277.7M301.08 268.9L301.08 276.82L301.68 277.7L302.68 277.7M299.88 270.66L302.48 270.66M305.32 270.66L307.32 270.66L308.32 272.13L308.32 276.23L307.32 277.7L305.32 277.7L304.32 276.23L304.32 272.13ZM309.86 277.7L309.86 270.66M309.86 272.13L310.86 270.66L312.86 270.66M314.4 277.7L314.4 270.66M314.4 272.13L315.4 270.66L317.4 270.66L318.4 272.13L318.4 277.7M320.44 270.66L322.44 270.66L323.44 272.13L323.44 276.23L322.44 277.7L320.44 277.7L319.44 276.23L319.44 272.13ZM330.32 270.66L331.52 268.9L331.52 277.7M334.56 268.9L338.56 268.9L338.56 270.07L336.06 277.7" fill="none" stroke="#3c3c3c" stroke-width="0.9" stroke-linejoin="round" stroke-linecap="round"/>
<line x1="187.5" y1="285.15" x2="226.5" y2="285.15" stroke="#0a0aa8" stroke-width="3" stroke-linecap="round"/>
<path d="M238.8 281.55L242.8 281.55L242.8 282.72L240.3 290.35M243.84 283.02L244.84 281.55L246.84 281.55L247.84 283.02L247.84 284.48L246.84 285.8L245.44 285.8M246.84 285.8L247.84 287.27L247.84 288.88L246.84 290.35L244.84 290.35L243.84 288.88M248.88 289.18L249.88 290.35L251.88 290.35L252.88 288.88L252.88 283.02L251.88 281.55L249.88 281.55L248.88 283.02L248.88 285.07L249.88 286.39L251.88 286.39L252.88 285.07M268 281.84L265 281.55L264 283.02L264 288.88L265 290.35L268 290.06M274.68 286.39L277.48 286.39M288.16 281.84L285.16 281.55L284.16 283.02L284.16 288.88L285.16 290.35L288.16 290.06M290.2 283.31L292.2 283.31L293.2 284.78L293.2 288.88L292.2 290.35L290.2 290.35L289.2 288.88L289.2 284.78ZM294.24 290.35L294.24 283.31M294.24 284.78L295.24 283.31L297.24 283.31L298.24 284.78L298.24 290.35M301.08 281.55L301.08 289.47L301.68 290.35L302.68 290.35M299.88 283.31L302.48 283.31M305.32 283.31L307.32 283.31L308.32 284.78L308.32 288.88L307.32 290.35L305.32 290.35L304.32 288.88L304.32 284.78ZM309.86 290.35L309.86 283.31M309.86 284.78L310.86 283.31L312.86 283.31M314.4 290.35L314.4 283.31M314.4 284.78L315.4 283.31L317.4 283.31L318.4 284.78L318.4 290.35M320.44 283.31L322.44 283.31L323.44 284.78L323.44 288.88L322.44 290.35L320.44 290.35L319.44 288.88L319.44 284.78ZM330.32 283.31L331.52 281.55L331.52 290.35M335.56 281.55L337.56 281.55L338.56 283.02L338.56 284.48L337.56 285.8L335.56 285.8L334.56 284.48L334.56 283.02ZM335.56 285.8L334.56 287.27L334.56 288.88L335.56 290.35L337.56 290.35L338.56 288.88L338.56 287.27L337.56 285.8" fill="none" stroke="#3c3c3c" stroke-width="0.9" stroke-linejoin="round" stroke-linecap="round"/>
<line x1="187.5" y1="297.8" x2="226.5" y2="297.8" stroke="#0a0aa8" stroke-width="3" stroke-linecap="round"/>
<path d="M239.8 294.2L241.8 294.2L242.8 295.67L242.8 297.13L241.8 298.45L239.8 298.45L238.8 297.13L238.8 295.67ZM239.8 298.45L238.8 299.92L238.8 301.53L239.8 303L241.8 303L242.8 301.53L242.8 299.92L241.8 298.45M246.84 303L246.84 294.2L243.84 300.36L247.84 300.36M249.88 294.2L251.88 294.2L252.88 295.67L252.88 297.13L251.88 298.45L249.88 298.45L248.88 297.13L248.88 295.67ZM249.88 298.45L248.88 299.92L248.88 301.53L249.88 303L251.88 303L252.88 301.53L252.88 299.92L251.88 298.45M268 294.49L265 294.2L264 295.67L264 301.53L265 303L268 302.71M274.68 299.04L277.48 299.04M288.16 294.49L285.16 294.2L284.16 295.67L284.16 301.53L285.16 303L288.16 302.71M290.2 295.96L292.2 295.96L293.2 297.43L293.2 301.53L292.2 303L290.2 303L289.2 301.53L289.2 297.43ZM294.24 303L294.24 295.96M294.24 297.43L295.24 295.96L297.24 295.96L298.24 297.43L298.24 303M301.08 294.2L301.08 302.12L301.68 303L302.68 303M299.88 295.96L302.48 295.96M305.32 295.96L307.32 295.96L308.32 297.43L308.32 301.53L307.32 303L305.32 303L304.32 301.53L304.32 297.43ZM309.86 303L309.86 295.96M309.86 297.43L310.86 295.96L312.86 295.96M314.4 303L314.4 295.96M314.4 297.43L315.4 295.96L317.4 295.96L318.4 297.43L318.4 303M320.44 295.96L322.44 295.96L323.44 297.43L323.44 301.53L322.44 303L320.44 303L319.44 301.53L319.44 297.43ZM330.32 295.96L331.52 294.2L331.52 303M334.56 301.83L335.56 303L337.56 303L338.56 301.53L338.56 295.67L337.56 294.2L335.56 294.2L334.56 295.67L334.56 297.72L335.56 299.04L337.56 299.04L338.56 297.72" fill="none" stroke="#3c3c3c" stroke-width="0.9" stroke-linejoin="round" stroke-linecap="round"/>
<line x1="187.5" y1="310.45" x2="226.5" y2="310.45" stroke="#0a0aa8" stroke-width="3" stroke-linecap="round"/>
<path d="M238.8 306.85L242.8 306.85L242.8 308.02L240.3 315.65M243.84 308.32L244.84 306.85L246.84 306.85L247.84 308.32L247.84 309.78L246.84 311.1L245.44 311.1M246.84 311.1L247.84 312.57L247.84 314.18L246.84 315.65L244.84 315.65L243.84 314.18M262.96 307.14L259.96 306.85L258.96 308.32L258.96 314.18L259.96 315.65L262.96 315.36M269.64 311.69L272.44 311.69M283.12 307.14L280.12 306.85L279.12 308.32L279.12 314.18L280.12 315.65L283.12 315.36M285.16 308.61L287.16 308.61L288.16 310.08L288.16 314.18L287.16 315.65L285.16 315.65L284.16 314.18L284.16 310.08ZM289.2 315.65L289.2 308.61M289.2 310.08L290.2 308.61L292.2 308.61L293.2 310.08L293.2 315.65M296.04 306.85L296.04 314.77L296.64 315.65L297.64 315.65M294.84 308.61L297.44 308.61M300.28 308.61L302.28 308.61L303.28 310.08L303.28 314.18L302.28 315.65L300.28 315.65L299.28 314.18L299.28 310.08ZM304.82 315.65L304.82 308.61M304.82 310.08L305.82 308.61L307.82 308.61M309.36 315.65L309.36 308.61M309.36 310.08L310.36 308.61L312.36 308.61L313.36 310.08L313.36 315.65M315.4 308.61L317.4 308.61L318.4 310.08L318.4 314.18L317.4 315.65L315.4 315.65L314.4 314.18L314.4 310.08ZM324.48 308.32L325.48 306.85L327.48 306.85L328.48 308.32L328.48 310.08L324.48 315.65L328.48 315.65M330.52 306.85L332.52 306.85L333.52 308.32L333.52 314.18L332.52 315.65L330.52 315.65L329.52 314.18L329.52 308.32ZM333.12 308.02L329.92 314.48" fill="none" stroke="#3c3c3c" stroke-width="0.9" stroke-linejoin="round" stroke-linecap="round"/>
<line x1="187.5" y1="323.1" x2="226.5" y2="323.1" stroke="#0a0aa8" stroke-width="3" stroke-linecap="round"/>
<path d="M238.8 327.13L239.8 328.3L241.8 328.3L242.8 326.83L242.8 320.97L241.8 319.5L239.8 319.5L238.8 320.97L238.8 323.02L239.8 324.34L241.8 324.34L242.8 323.02M244.84 319.5L246.84 319.5L247.84 320.97L247.84 326.83L246.84 328.3L244.84 328.3L243.84 326.83L243.84 320.97ZM247.44 320.67L244.24 327.13M262.96 319.79L259.96 319.5L258.96 320.97L258.96 326.83L259.96 328.3L262.96 328.01M269.64 324.34L272.44 324.34M283.12 319.79L280.12 319.5L279.12 320.97L279.12 326.83L280.12 328.3L283.12 328.01M285.16 321.26L287.16 321.26L288.16 322.73L288.16 326.83L287.16 328.3L285.16 328.3L284.16 326.83L284.16 322.73ZM289.2 328.3L289.2 321.26M289.2 322.73L290.2 321.26L292.2 321.26L293.2 322.73L293.2 328.3M296.04 319.5L296.04 327.42L296.64 328.3L297.64 328.3M294.84 321.26L297.44 321.26M300.28 321.26L302.28 321.26L303.28 322.73L303.28 326.83L302.28 328.3L300.28 328.3L299.28 326.83L299.28 322.73ZM304.82 328.3L304.82 321.26M304.82 322.73L305.82 321.26L307.82 321.26M309.36 328.3L309.36 321.26M309.36 322.73L310.36 321.26L312.36 321.26L313.36 322.73L313.36 328.3M315.4 321.26L317.4 321.26L318.4 322.73L318.4 326.83L317.4 328.3L315.4 328.3L314.4 326.83L314.4 322.73ZM324.48 320.97L325.48 319.5L327.48 319.5L328.48 320.97L328.48 322.73L324.48 328.3L328.48 328.3M330.32 321.26L331.52 319.5L331.52 328.3" fill="none" stroke="#3c3c3c" stroke-width="0.9" stroke-linejoin="round" stroke-linecap="round"/>
<line x1="386" y1="95.4" x2="425" y2="95.4" stroke="#0a0aa8" stroke-width="3" stroke-linecap="round"/>
<path d="M437.2 99.43L438.2 100.6L440.2 100.6L441.2 99.13L441.2 93.27L440.2 91.8L438.2 91.8L437.2 93.27L437.2 95.32L438.2 96.64L440.2 96.64L441.2 95.32M446.24 92.97L445.24 91.8L443.24 91.8L442.24 93.27L442.24 99.13L443.24 100.6L445.24 100.6L446.24 99.13L446.24 97.08L445.24 95.76L443.24 95.76L442.24 97.08M461.36 92.09L458.36 91.8L457.36 93.27L457.36 99.13L458.36 100.6L461.36 100.31M468.04 96.64L470.84 96.64M481.52 92.09L478.52 91.8L477.52 93.27L477.52 99.13L478.52 100.6L481.52 100.31M483.56 93.56L485.56 93.56L486.56 95.03L486.56 99.13L485.56 100.6L483.56 100.6L482.56 99.13L482.56 95.03ZM487.6 100.6L487.6 93.56M487.6 95.03L488.6 93.56L490.6 93.56L491.6 95.03L491.6 100.6M494.44 91.8L494.44 99.72L495.04 100.6L496.04 100.6M493.24 93.56L495.84 93.56M498.68 93.56L500.68 93.56L501.68 95.03L501.68 99.13L500.68 100.6L498.68 100.6L497.68 99.13L497.68 95.03ZM503.22 100.6L503.22 93.56M503.22 95.03L504.22 93.56L506.22 93.56M507.76 100.6L507.76 93.56M507.76 95.03L508.76 93.56L510.76 93.56L511.76 95.03L511.76 100.6M513.8 93.56L515.8 93.56L516.8 95.03L516.8 99.13L515.8 100.6L513.8 100.6L512.8 99.13L512.8 95.03ZM522.88 93.27L523.88 91.8L525.88 91.8L526.88 93.27L526.88 95.03L522.88 100.6L526.88 100.6M527.92 93.27L528.92 91.8L530.92 91.8L531.92 93.27L531.92 95.03L527.92 100.6L531.92 100.6" fill="none" stroke="#3c3c3c" stroke-width="0.9" stroke-linejoin="round" stroke-linecap="round"/>
<line x1="386" y1="108.05" x2="425" y2="108.05" stroke="#0a0aa8" stroke-width="3" stroke-linecap="round"/>
<path d="M438.2 104.45L440.2 104.45L441.2 105.92L441.2 107.38L440.2 108.7L438.2 108.7L437.2 107.38L437.2 105.92ZM438.2 108.7L437.2 110.17L437.2 111.78L438.2 113.25L440.2 113.25L441.2 111.78L441.2 110.17L440.2 108.7M446.24 105.62L445.24 104.45L443.24 104.45L442.24 105.92L442.24 111.78L443.24 113.25L445.24 113.25L446.24 111.78L446.24 109.73L445.24 108.41L443.24 108.41L442.24 109.73M461.36 104.74L458.36 104.45L457.36 105.92L457.36 111.78L458.36 113.25L461.36 112.96M468.04 109.29L470.84 109.29M481.52 104.74L478.52 104.45L477.52 105.92L477.52 111.78L478.52 113.25L481.52 112.96M483.56 106.21L485.56 106.21L486.56 107.68L486.56 111.78L485.56 113.25L483.56 113.25L482.56 111.78L482.56 107.68ZM487.6 113.25L487.6 106.21M487.6 107.68L488.6 106.21L490.6 106.21L491.6 107.68L491.6 113.25M494.44 104.45L494.44 112.37L495.04 113.25L496.04 113.25M493.24 106.21L495.84 106.21M498.68 106.21L500.68 106.21L501.68 107.68L501.68 111.78L500.68 113.25L498.68 113.25L497.68 111.78L497.68 107.68ZM503.22 113.25L503.22 106.21M503.22 107.68L504.22 106.21L506.22 106.21M507.76 113.25L507.76 106.21M507.76 107.68L508.76 106.21L510.76 106.21L511.76 107.68L511.76 113.25M513.8 106.21L515.8 106.21L516.8 107.68L516.8 111.78L515.8 113.25L513.8 113.25L512.8 111.78L512.8 107.68ZM522.88 105.92L523.88 104.45L525.88 104.45L526.88 105.92L526.88 107.68L522.88 113.25L526.88 113.25M527.92 105.92L528.92 104.45L530.92 104.45L531.92 105.92L531.92 107.38L530.92 108.7L529.52 108.7M530.92 108.7L531.92 110.17L531.92 111.78L530.92 113.25L528.92 113.25L527.92 111.78" fill="none" stroke="#3c3c3c" stroke-width="0.9" stroke-linejoin="round" stroke-linecap="round"/>
<line x1="386" y1="120.7" x2="425" y2="120.7" stroke="#0a0aa8" stroke-width="3" stroke-linecap="round"/>
<path d="M438 118.86L439.2 117.1L439.2 125.9M443.24 117.1L445.24 117.1L446.24 118.57L446.24 124.43L445.24 125.9L443.24 125.9L442.24 124.43L442.24 118.57ZM445.84 118.27L442.64 124.73M448.28 117.1L450.28 117.1L451.28 118.57L451.28 120.03L450.28 121.35L448.28 121.35L447.28 120.03L447.28 118.57ZM448.28 121.35L447.28 122.82L447.28 124.43L448.28 125.9L450.28 125.9L451.28 124.43L451.28 122.82L450.28 121.35M466.4 117.39L463.4 117.1L462.4 118.57L462.4 124.43L463.4 125.9L466.4 125.61M473.08 121.94L475.88 121.94M486.56 117.39L483.56 117.1L482.56 118.57L482.56 124.43L483.56 125.9L486.56 125.61M488.6 118.86L490.6 118.86L491.6 120.33L491.6 124.43L490.6 125.9L488.6 125.9L487.6 124.43L487.6 120.33ZM492.64 125.9L492.64 118.86M492.64 120.33L493.64 118.86L495.64 118.86L496.64 120.33L496.64 125.9M499.48 117.1L499.48 125.02L500.08 125.9L501.08 125.9M498.28 118.86L500.88 118.86M503.72 118.86L505.72 118.86L506.72 120.33L506.72 124.43L505.72 125.9L503.72 125.9L502.72 124.43L502.72 120.33ZM508.26 125.9L508.26 118.86M508.26 120.33L509.26 118.86L511.26 118.86M512.8 125.9L512.8 118.86M512.8 120.33L513.8 118.86L515.8 118.86L516.8 120.33L516.8 125.9M518.84 118.86L520.84 118.86L521.84 120.33L521.84 124.43L520.84 125.9L518.84 125.9L517.84 124.43L517.84 120.33ZM527.92 118.57L528.92 117.1L530.92 117.1L531.92 118.57L531.92 120.33L527.92 125.9L531.92 125.9M535.96 125.9L535.96 117.1L532.96 123.26L536.96 123.26" fill="none" stroke="#3c3c3c" stroke-width="0.9" stroke-linejoin="round" stroke-linecap="round"/>
<line x1="386" y1="133.35" x2="425" y2="133.35" stroke="#0a0aa8" stroke-width="3" stroke-linecap="round"/>
<path d="M437.2 131.22L438.2 129.75L440.2 129.75L441.2 131.22L441.2 132.98L437.2 138.55L441.2 138.55M442.24 137.38L443.24 138.55L445.24 138.55L446.24 137.08L446.24 131.22L445.24 129.75L443.24 129.75L442.24 131.22L442.24 133.27L443.24 134.59L445.24 134.59L446.24 133.27M447.28 137.38L448.28 138.55L450.28 138.55L451.28 137.08L451.28 131.22L450.28 129.75L448.28 129.75L447.28 131.22L447.28 133.27L448.28 134.59L450.28 134.59L451.28 133.27M466.4 130.04L463.4 129.75L462.4 131.22L462.4 137.08L463.4 138.55L466.4 138.26M473.08 134.59L475.88 134.59M486.56 130.04L483.56 129.75L482.56 131.22L482.56 137.08L483.56 138.55L486.56 138.26M488.6 131.51L490.6 131.51L491.6 132.98L491.6 137.08L490.6 138.55L488.6 138.55L487.6 137.08L487.6 132.98ZM492.64 138.55L492.64 131.51M492.64 132.98L493.64 131.51L495.64 131.51L496.64 132.98L496.64 138.55M499.48 129.75L499.48 137.67L500.08 138.55L501.08 138.55M498.28 131.51L500.88 131.51M503.72 131.51L505.72 131.51L506.72 132.98L506.72 137.08L505.72 138.55L503.72 138.55L502.72 137.08L502.72 132.98ZM508.26 138.55L508.26 131.51M508.26 132.98L509.26 131.51L511.26 131.51M512.8 138.55L512.8 131.51M512.8 132.98L513.8 131.51L515.8 131.51L516.8 132.98L516.8 138.55M518.84 131.51L520.84 131.51L521.84 132.98L521.84 137.08L520.84 138.55L518.84 138.55L517.84 137.08L517.84 132.98ZM527.92 131.22L528.92 129.75L530.92 129.75L531.92 131.22L531.92 132.98L527.92 138.55L531.92 138.55M536.96 129.75L533.26 129.75L532.96 133.56L535.96 133.56L536.96 135.03L536.96 137.08L535.96 138.55L533.96 138.55L532.96 137.08" fill="none" stroke="#3c3c3c" stroke-width="0.9" stroke-linejoin="round" stroke-linecap="round"/>
<line x1="386" y1="146" x2="425" y2="146" stroke="#0a0aa8" stroke-width="3" stroke-linecap="round"/>
<path d="M437.2 143.87L438.2 142.4L440.2 142.4L441.2 143.87L441.2 145.33L440.2 146.65L438.8 146.65M440.2 146.65L441.2 148.12L441.2 149.73L440.2 151.2L438.2 151.2L437.2 149.73M443.24 142.4L445.24 142.4L446.24 143.87L446.24 149.73L445.24 151.2L443.24 151.2L442.24 149.73L442.24 143.87ZM445.84 143.57L442.64 150.03M448.28 142.4L450.28 142.4L451.28 143.87L451.28 149.73L450.28 151.2L448.28 151.2L447.28 149.73L447.28 143.87ZM450.88 143.57L447.68 150.03M466.4 142.69L463.4 142.4L462.4 143.87L462.4 149.73L463.4 151.2L466.4 150.91M473.08 147.24L475.88 147.24M486.56 142.69L483.56 142.4L482.56 143.87L482.56 149.73L483.56 151.2L486.56 150.91M488.6 144.16L490.6 144.16L491.6 145.63L491.6 149.73L490.6 151.2L488.6 151.2L487.6 149.73L487.6 145.63ZM492.64 151.2L492.64 144.16M492.64 145.63L493.64 144.16L495.64 144.16L496.64 145.63L496.64 151.2M499.48 142.4L499.48 150.32L500.08 151.2L501.08 151.2M498.28 144.16L500.88 144.16M503.72 144.16L505.72 144.16L506.72 145.63L506.72 149.73L505.72 151.2L503.72 151.2L502.72 149.73L502.72 145.63ZM508.26 151.2L508.26 144.16M508.26 145.63L509.26 144.16L511.26 144.16M512.8 151.2L512.8 144.16M512.8 145.63L513.8 144.16L515.8 144.16L516.8 145.63L516.8 151.2M518.84 144.16L520.84 144.16L521.84 145.63L521.84 149.73L520.84 151.2L518.84 151.2L517.84 149.73L517.84 145.63ZM527.92 143.87L528.92 142.4L530.92 142.4L531.92 143.87L531.92 145.63L527.92 151.2L531.92 151.2M536.96 143.57L535.96 142.4L533.96 142.4L532.96 143.87L532.96 149.73L533.96 151.2L535.96 151.2L536.96 149.73L536.96 147.68L535.96 146.36L533.96 146.36L532.96 147.68" fill="none" stroke="#3c3c3c" stroke-width="0.9" stroke-linejoin="round" stroke-linecap="round"/>
<line x1="386" y1="158.65" x2="425" y2="158.65" stroke="#0a0aa8" stroke-width="3" stroke-linecap="round"/>
<path d="M437.2 156.52L438.2 155.05L440.2 155.05L441.2 156.52L441.2 158.28L437.2 163.85L441.2 163.85M442.24 155.05L446.24 155.05L446.24 156.22L443.74 163.85M451.28 155.05L447.58 155.05L447.28 158.86L450.28 158.86L451.28 160.33L451.28 162.38L450.28 163.85L448.28 163.85L447.28 162.38M466.4 155.34L463.4 155.05L462.4 156.52L462.4 162.38L463.4 163.85L466.4 163.56M473.08 159.89L475.88 159.89M486.56 155.34L483.56 155.05L482.56 156.52L482.56 162.38L483.56 163.85L486.56 163.56M488.6 156.81L490.6 156.81L491.6 158.28L491.6 162.38L490.6 163.85L488.6 163.85L487.6 162.38L487.6 158.28ZM492.64 163.85L492.64 156.81M492.64 158.28L493.64 156.81L495.64 156.81L496.64 158.28L496.64 163.85M499.48 155.05L499.48 162.97L500.08 163.85L501.08 163.85M498.28 156.81L500.88 156.81M503.72 156.81L505.72 156.81L506.72 158.28L506.72 162.38L505.72 163.85L503.72 163.85L502.72 162.38L502.72 158.28ZM508.26 163.85L508.26 156.81M508.26 158.28L509.26 156.81L511.26 156.81M512.8 163.85L512.8 156.81M512.8 158.28L513.8 156.81L515.8 156.81L516.8 158.28L516.8 163.85M518.84 156.81L520.84 156.81L521.84 158.28L521.84 162.38L520.84 163.85L518.84 163.85L517.84 162.38L517.84 158.28ZM527.92 156.52L528.92 155.05L530.92 155.05L531.92 156.52L531.92 158.28L527.92 163.85L531.92 163.85M532.96 155.05L536.96 155.05L536.96 156.22L534.46 163.85" fill="none" stroke="#3c3c3c" stroke-width="0.9" stroke-linejoin="round" stroke-linecap="round"/>
<line x1="386" y1="171.3" x2="425" y2="171.3" stroke="#0a0aa8" stroke-width="3" stroke-linecap="round"/>
<path d="M437.2 169.17L438.2 167.7L440.2 167.7L441.2 169.17L441.2 170.93L437.2 176.5L441.2 176.5M442.24 169.17L443.24 167.7L445.24 167.7L446.24 169.17L446.24 170.93L442.24 176.5L446.24 176.5M450.28 176.5L450.28 167.7L447.28 173.86L451.28 173.86M466.4 167.99L463.4 167.7L462.4 169.17L462.4 175.03L463.4 176.5L466.4 176.21M473.08 172.54L475.88 172.54M486.56 167.99L483.56 167.7L482.56 169.17L482.56 175.03L483.56 176.5L486.56 176.21M488.6 169.46L490.6 169.46L491.6 170.93L491.6 175.03L490.6 176.5L488.6 176.5L487.6 175.03L487.6 170.93ZM492.64 176.5L492.64 169.46M492.64 170.93L493.64 169.46L495.64 169.46L496.64 170.93L496.64 176.5M499.48 167.7L499.48 175.62L500.08 176.5L501.08 176.5M498.28 169.46L500.88 169.46M503.72 169.46L505.72 169.46L506.72 170.93L506.72 175.03L505.72 176.5L503.72 176.5L502.72 175.03L502.72 170.93ZM508.26 176.5L508.26 169.46M508.26 170.93L509.26 169.46L511.26 169.46M512.8 176.5L512.8 169.46M512.8 170.93L513.8 169.46L515.8 169.46L516.8 170.93L516.8 176.5M518.84 169.46L520.84 169.46L521.84 170.93L521.84 175.03L520.84 176.5L518.84 176.5L517.84 175.03L517.84 170.93ZM527.92 169.17L528.92 167.7L530.92 167.7L531.92 169.17L531.92 170.93L527.92 176.5L531.92 176.5M533.96 167.7L535.96 167.7L536.96 169.17L536.96 170.63L535.96 171.95L533.96 171.95L532.96 170.63L532.96 169.17ZM533.96 171.95L532.96 173.42L532.96 175.03L533.96 176.5L535.96 176.5L536.96 175.03L536.96 173.42L535.96 171.95" fill="none" stroke="#3c3c3c" stroke-width="0.9" stroke-linejoin="round" stroke-linecap="round"/>
<line x1="386" y1="183.95" x2="425" y2="183.95" stroke="#0a0aa8" stroke-width="3" stroke-linecap="round"/>
<path d="M441.2 180.35L437.5 180.35L437.2 184.16L440.2 184.16L441.2 185.63L441.2 187.68L440.2 189.15L438.2 189.15L437.2 187.68M446.24 181.52L445.24 180.35L443.24 180.35L442.24 181.82L442.24 187.68L443.24 189.15L445.24 189.15L446.24 187.68L446.24 185.63L445.24 184.31L443.24 184.31L442.24 185.63M447.28 180.35L451.28 180.35L451.28 181.52L448.78 189.15M466.4 180.64L463.4 180.35L462.4 181.82L462.4 187.68L463.4 189.15L466.4 188.86M473.08 185.19L475.88 185.19M486.56 180.64L483.56 180.35L482.56 181.82L482.56 187.68L483.56 189.15L486.56 188.86M488.6 182.11L490.6 182.11L491.6 183.58L491.6 187.68L490.6 189.15L488.6 189.15L487.6 187.68L487.6 183.58ZM492.64 189.15L492.64 182.11M492.64 183.58L493.64 182.11L495.64 182.11L496.64 183.58L496.64 189.15M499.48 180.35L499.48 188.27L500.08 189.15L501.08 189.15M498.28 182.11L500.88 182.11M503.72 182.11L505.72 182.11L506.72 183.58L506.72 187.68L505.72 189.15L503.72 189.15L502.72 187.68L502.72 183.58ZM508.26 189.15L508.26 182.11M508.26 183.58L509.26 182.11L511.26 182.11M512.8 189.15L512.8 182.11M512.8 183.58L513.8 182.11L515.8 182.11L516.8 183.58L516.8 189.15M518.84 182.11L520.84 182.11L521.84 183.58L521.84 187.68L520.84 189.15L518.84 189.15L517.84 187.68L517.84 183.58ZM527.92 181.82L528.92 180.35L530.92 180.35L531.92 181.82L531.92 183.58L527.92 189.15L531.92 189.15M532.96 187.98L533.96 189.15L535.96 189.15L536.96 187.68L536.96 181.82L535.96 180.35L533.96 180.35L532.96 181.82L532.96 183.87L533.96 185.19L535.96 185.19L536.96 183.87" fill="none" stroke="#3c3c3c" stroke-width="0.9" stroke-linejoin="round" stroke-linecap="round"/>
<line x1="386" y1="196.6" x2="425" y2="196.6" stroke="#0a0aa8" stroke-width="3" stroke-linecap="round"/>
<path d="M441.2 194.17L440.2 193L438.2 193L437.2 194.47L437.2 200.33L438.2 201.8L440.2 201.8L441.2 200.33L441.2 198.28L440.2 196.96L438.2 196.96L437.2 198.28M443.04 194.76L444.24 193L444.24 201.8M447.28 194.47L448.28 193L450.28 193L451.28 194.47L451.28 195.93L450.28 197.25L448.88 197.25M450.28 197.25L451.28 198.72L451.28 200.33L450.28 201.8L448.28 201.8L447.28 200.33M466.4 193.29L463.4 193L462.4 194.47L462.4 200.33L463.4 201.8L466.4 201.51M473.08 197.84L475.88 197.84M486.56 193.29L483.56 193L482.56 194.47L482.56 200.33L483.56 201.8L486.56 201.51M488.6 194.76L490.6 194.76L491.6 196.23L491.6 200.33L490.6 201.8L488.6 201.8L487.6 200.33L487.6 196.23ZM492.64 201.8L492.64 194.76M492.64 196.23L493.64 194.76L495.64 194.76L496.64 196.23L496.64 201.8M499.48 193L499.48 200.92L500.08 201.8L501.08 201.8M498.28 194.76L500.88 194.76M503.72 194.76L505.72 194.76L506.72 196.23L506.72 200.33L505.72 201.8L503.72 201.8L502.72 200.33L502.72 196.23ZM508.26 201.8L508.26 194.76M508.26 196.23L509.26 194.76L511.26 194.76M512.8 201.8L512.8 194.76M512.8 196.23L513.8 194.76L515.8 194.76L516.8 196.23L516.8 201.8M518.84 194.76L520.84 194.76L521.84 196.23L521.84 200.33L520.84 201.8L518.84 201.8L517.84 200.33L517.84 196.23ZM527.92 194.47L528.92 193L530.92 193L531.92 194.47L531.92 195.93L530.92 197.25L529.52 197.25M530.92 197.25L531.92 198.72L531.92 200.33L530.92 201.8L528.92 201.8L527.92 200.33M533.96 193L535.96 193L536.96 194.47L536.96 200.33L535.96 201.8L533.96 201.8L532.96 200.33L532.96 194.47ZM536.56 194.17L533.36 200.63" fill="none" stroke="#3c3c3c" stroke-width="0.9" stroke-linejoin="round" stroke-linecap="round"/>
<line x1="386" y1="209.25" x2="425" y2="209.25" stroke="#0a0aa8" stroke-width="3" stroke-linecap="round"/>
<path d="M441.2 206.82L440.2 205.65L438.2 205.65L437.2 207.12L437.2 212.98L438.2 214.45L440.2 214.45L441.2 212.98L441.2 210.93L440.2 209.61L438.2 209.61L437.2 210.93M445.24 214.45L445.24 205.65L442.24 211.81L446.24 211.81M451.28 206.82L450.28 205.65L448.28 205.65L447.28 207.12L447.28 212.98L448.28 214.45L450.28 214.45L451.28 212.98L451.28 210.93L450.28 209.61L448.28 209.61L447.28 210.93M466.4 205.94L463.4 205.65L462.4 207.12L462.4 212.98L463.4 214.45L466.4 214.16M473.08 210.49L475.88 210.49M486.56 205.94L483.56 205.65L482.56 207.12L482.56 212.98L483.56 214.45L486.56 214.16M488.6 207.41L490.6 207.41L491.6 208.88L491.6 212.98L490.6 214.45L488.6 214.45L487.6 212.98L487.6 208.88ZM492.64 214.45L492.64 207.41M492.64 208.88L493.64 207.41L495.64 207.41L496.64 208.88L496.64 214.45M499.48 205.65L499.48 213.57L500.08 214.45L501.08 214.45M498.28 207.41L500.88 207.41M503.72 207.41L505.72 207.41L506.72 208.88L506.72 212.98L505.72 214.45L503.72 214.45L502.72 212.98L502.72 208.88ZM508.26 214.45L508.26 207.41M508.26 208.88L509.26 207.41L511.26 207.41M512.8 214.45L512.8 207.41M512.8 208.88L513.8 207.41L515.8 207.41L516.8 208.88L516.8 214.45M518.84 207.41L520.84 207.41L521.84 208.88L521.84 212.98L520.84 214.45L518.84 214.45L517.84 212.98L517.84 208.88ZM527.92 207.12L528.92 205.65L530.92 205.65L531.92 207.12L531.92 208.58L530.92 209.9L529.52 209.9M530.92 209.9L531.92 211.37L531.92 212.98L530.92 214.45L528.92 214.45L527.92 212.98M533.76 207.41L534.96 205.65L534.96 214.45" fill="none" stroke="#3c3c3c" stroke-width="0.9" stroke-linejoin="round" stroke-linecap="round"/>
<line x1="386" y1="221.9" x2="425" y2="221.9" stroke="#0a0aa8" stroke-width="3" stroke-linecap="round"/>
<path d="M441.2 219.47L440.2 218.3L438.2 218.3L437.2 219.77L437.2 225.63L438.2 227.1L440.2 227.1L441.2 225.63L441.2 223.58L440.2 222.26L438.2 222.26L437.2 223.58M446.24 219.47L445.24 218.3L443.24 218.3L442.24 219.77L442.24 225.63L443.24 227.1L445.24 227.1L446.24 225.63L446.24 223.58L445.24 222.26L443.24 222.26L442.24 223.58M451.28 218.3L447.58 218.3L447.28 222.11L450.28 222.11L451.28 223.58L451.28 225.63L450.28 227.1L448.28 227.1L447.28 225.63M466.4 218.59L463.4 218.3L462.4 219.77L462.4 225.63L463.4 227.1L466.4 226.81M473.08 223.14L475.88 223.14M486.56 218.59L483.56 218.3L482.56 219.77L482.56 225.63L483.56 227.1L486.56 226.81M488.6 220.06L490.6 220.06L491.6 221.53L491.6 225.63L490.6 227.1L488.6 227.1L487.6 225.63L487.6 221.53ZM492.64 227.1L492.64 220.06M492.64 221.53L493.64 220.06L495.64 220.06L496.64 221.53L496.64 227.1M499.48 218.3L499.48 226.22L500.08 227.1L501.08 227.1M498.28 220.06L500.88 220.06M503.72 220.06L505.72 220.06L506.72 221.53L506.72 225.63L505.72 227.1L503.72 227.1L502.72 225.63L502.72 221.53ZM508.26 227.1L508.26 220.06M508.26 221.53L509.26 220.06L511.26 220.06M512.8 227.1L512.8 220.06M512.8 221.53L513.8 220.06L515.8 220.06L516.8 221.53L516.8 227.1M518.84 220.06L520.84 220.06L521.84 221.53L521.84 225.63L520.84 227.1L518.84 227.1L517.84 225.63L517.84 221.53ZM527.92 219.77L528.92 218.3L530.92 218.3L531.92 219.77L531.92 221.23L530.92 222.55L529.52 222.55M530.92 222.55L531.92 224.02L531.92 225.63L530.92 227.1L528.92 227.1L527.92 225.63M532.96 219.77L533.96 218.3L535.96 218.3L536.96 219.77L536.96 221.53L532.96 227.1L536.96 227.1" fill="none" stroke="#3c3c3c" stroke-width="0.9" stroke-linejoin="round" stroke-linecap="round"/>
<line x1="386" y1="234.55" x2="425" y2="234.55" stroke="#0a0aa8" stroke-width="3" stroke-linecap="round"/>
<path d="M438.2 230.95L440.2 230.95L441.2 232.42L441.2 233.88L440.2 235.2L438.2 235.2L437.2 233.88L437.2 232.42ZM438.2 235.2L437.2 236.67L437.2 238.28L438.2 239.75L440.2 239.75L441.2 238.28L441.2 236.67L440.2 235.2M445.24 239.75L445.24 230.95L442.24 237.11L446.24 237.11M448.28 230.95L450.28 230.95L451.28 232.42L451.28 233.88L450.28 235.2L448.28 235.2L447.28 233.88L447.28 232.42ZM448.28 235.2L447.28 236.67L447.28 238.28L448.28 239.75L450.28 239.75L451.28 238.28L451.28 236.67L450.28 235.2M466.4 231.24L463.4 230.95L462.4 232.42L462.4 238.28L463.4 239.75L466.4 239.46M473.08 235.79L475.88 235.79M486.56 231.24L483.56 230.95L482.56 232.42L482.56 238.28L483.56 239.75L486.56 239.46M488.6 232.71L490.6 232.71L491.6 234.18L491.6 238.28L490.6 239.75L488.6 239.75L487.6 238.28L487.6 234.18ZM492.64 239.75L492.64 232.71M492.64 234.18L493.64 232.71L495.64 232.71L496.64 234.18L496.64 239.75M499.48 230.95L499.48 238.87L500.08 239.75L501.08 239.75M498.28 232.71L500.88 232.71M503.72 232.71L505.72 232.71L506.72 234.18L506.72 238.28L505.72 239.75L503.72 239.75L502.72 238.28L502.72 234.18ZM508.26 239.75L508.26 232.71M508.26 234.18L509.26 232.71L511.26 232.71M512.8 239.75L512.8 232.71M512.8 234.18L513.8 232.71L515.8 232.71L516.8 234.18L516.8 239.75M518.84 232.71L520.84 232.71L521.84 234.18L521.84 238.28L520.84 239.75L518.84 239.75L517.84 238.28L517.84 234.18ZM527.92 232.42L528.92 230.95L530.92 230.95L531.92 232.42L531.92 233.88L530.92 235.2L529.52 235.2M530.92 235.2L531.92 236.67L531.92 238.28L530.92 239.75L528.92 239.75L527.92 238.28M532.96 232.42L533.96 230.95L535.96 230.95L536.96 232.42L536.96 233.88L535.96 235.2L534.56 235.2M535.96 235.2L536.96 236.67L536.96 238.28L535.96 239.75L533.96 239.75L532.96 238.28" fill="none" stroke="#3c3c3c" stroke-width="0.9" stroke-linejoin="round" stroke-linecap="round"/>
<line x1="386" y1="247.2" x2="425" y2="247.2" stroke="#0a0aa8" stroke-width="3" stroke-linecap="round"/>
<path d="M437.2 243.6L441.2 243.6L441.2 244.77L438.7 252.4M442.24 245.07L443.24 243.6L445.24 243.6L446.24 245.07L446.24 246.53L445.24 247.85L443.84 247.85M445.24 247.85L446.24 249.32L446.24 250.93L445.24 252.4L443.24 252.4L442.24 250.93M448.08 245.36L449.28 243.6L449.28 252.4M466.4 243.89L463.4 243.6L462.4 245.07L462.4 250.93L463.4 252.4L466.4 252.11M473.08 248.44L475.88 248.44M486.56 243.89L483.56 243.6L482.56 245.07L482.56 250.93L483.56 252.4L486.56 252.11M488.6 245.36L490.6 245.36L491.6 246.83L491.6 250.93L490.6 252.4L488.6 252.4L487.6 250.93L487.6 246.83ZM492.64 252.4L492.64 245.36M492.64 246.83L493.64 245.36L495.64 245.36L496.64 246.83L496.64 252.4M499.48 243.6L499.48 251.52L500.08 252.4L501.08 252.4M498.28 245.36L500.88 245.36M503.72 245.36L505.72 245.36L506.72 246.83L506.72 250.93L505.72 252.4L503.72 252.4L502.72 250.93L502.72 246.83ZM508.26 252.4L508.26 245.36M508.26 246.83L509.26 245.36L511.26 245.36M512.8 252.4L512.8 245.36M512.8 246.83L513.8 245.36L515.8 245.36L516.8 246.83L516.8 252.4M518.84 245.36L520.84 245.36L521.84 246.83L521.84 250.93L520.84 252.4L518.84 252.4L517.84 250.93L517.84 246.83ZM527.92 245.07L528.92 243.6L530.92 243.6L531.92 245.07L531.92 246.53L530.92 247.85L529.52 247.85M530.92 247.85L531.92 249.32L531.92 250.93L530.92 252.4L528.92 252.4L527.92 250.93M535.96 252.4L535.96 243.6L532.96 249.76L536.96 249.76" fill="none" stroke="#3c3c3c" stroke-width="0.9" stroke-linejoin="round" stroke-linecap="round"/>
<line x1="386" y1="259.85" x2="425" y2="259.85" stroke="#0a0aa8" stroke-width="3" stroke-linecap="round"/>
<path d="M437.2 256.25L441.2 256.25L441.2 257.42L438.7 265.05M445.24 265.05L445.24 256.25L442.24 262.41L446.24 262.41M448.28 256.25L450.28 256.25L451.28 257.72L451.28 263.58L450.28 265.05L448.28 265.05L447.28 263.58L447.28 257.72ZM450.88 257.42L447.68 263.88M466.4 256.54L463.4 256.25L462.4 257.72L462.4 263.58L463.4 265.05L466.4 264.76M473.08 261.09L475.88 261.09M486.56 256.54L483.56 256.25L482.56 257.72L482.56 263.58L483.56 265.05L486.56 264.76M488.6 258.01L490.6 258.01L491.6 259.48L491.6 263.58L490.6 265.05L488.6 265.05L487.6 263.58L487.6 259.48ZM492.64 265.05L492.64 258.01M492.64 259.48L493.64 258.01L495.64 258.01L496.64 259.48L496.64 265.05M499.48 256.25L499.48 264.17L500.08 265.05L501.08 265.05M498.28 258.01L500.88 258.01M503.72 258.01L505.72 258.01L506.72 259.48L506.72 263.58L505.72 265.05L503.72 265.05L502.72 263.58L502.72 259.48ZM508.26 265.05L508.26 258.01M508.26 259.48L509.26 258.01L511.26 258.01M512.8 265.05L512.8 258.01M512.8 259.48L513.8 258.01L515.8 258.01L516.8 259.48L516.8 265.05M518.84 258.01L520.84 258.01L521.84 259.48L521.84 263.58L520.84 265.05L518.84 265.05L517.84 263.58L517.84 259.48ZM527.92 257.72L528.92 256.25L530.92 256.25L531.92 257.72L531.92 259.18L530.92 260.5L529.52 260.5M530.92 260.5L531.92 261.97L531.92 263.58L530.92 265.05L528.92 265.05L527.92 263.58M536.96 256.25L533.26 256.25L532.96 260.06L535.96 260.06L536.96 261.53L536.96 263.58L535.96 265.05L533.96 265.05L532.96 263.58" fill="none" stroke="#3c3c3c" stroke-width="0.9" stroke-linejoin="round" stroke-linecap="round"/>
<line x1="386" y1="272.5" x2="425" y2="272.5" stroke="#0a0aa8" stroke-width="3" stroke-linecap="round"/>
<path d="M437.2 268.9L441.2 268.9L441.2 270.07L438.7 277.7M446.24 270.07L445.24 268.9L443.24 268.9L442.24 270.37L442.24 276.23L443.24 277.7L445.24 277.7L446.24 276.23L446.24 274.18L445.24 272.86L443.24 272.86L442.24 274.18M450.28 277.7L450.28 268.9L447.28 275.06L451.28 275.06M466.4 269.19L463.4 268.9L462.4 270.37L462.4 276.23L463.4 277.7L466.4 277.41M473.08 273.74L475.88 273.74M486.56 269.19L483.56 268.9L482.56 270.37L482.56 276.23L483.56 277.7L486.56 277.41M488.6 270.66L490.6 270.66L491.6 272.13L491.6 276.23L490.6 277.7L488.6 277.7L487.6 276.23L487.6 272.13ZM492.64 277.7L492.64 270.66M492.64 272.13L493.64 270.66L495.64 270.66L496.64 272.13L496.64 277.7M499.48 268.9L499.48 276.82L500.08 277.7L501.08 277.7M498.28 270.66L500.88 270.66M503.72 270.66L505.72 270.66L506.72 272.13L506.72 276.23L505.72 277.7L503.72 277.7L502.72 276.23L502.72 272.13ZM508.26 277.7L508.26 270.66M508.26 272.13L509.26 270.66L511.26 270.66M512.8 277.7L512.8 270.66M512.8 272.13L513.8 270.66L515.8 270.66L516.8 272.13L516.8 277.7M518.84 270.66L520.84 270.66L521.84 272.13L521.84 276.23L520.84 277.7L518.84 277.7L517.84 276.23L517.84 272.13ZM527.92 270.37L528.92 268.9L530.92 268.9L531.92 270.37L531.92 271.83L530.92 273.15L529.52 273.15M530.92 273.15L531.92 274.62L531.92 276.23L530.92 277.7L528.92 277.7L527.92 276.23M536.96 270.07L535.96 268.9L533.96 268.9L532.96 270.37L532.96 276.23L533.96 277.7L535.96 277.7L536.96 276.23L536.96 274.18L535.96 272.86L533.96 272.86L532.96 274.18" fill="none" stroke="#3c3c3c" stroke-width="0.9" stroke-linejoin="round" stroke-linecap="round"/>
<line x1="386" y1="285.15" x2="425" y2="285.15" stroke="#0a0aa8" stroke-width="3" stroke-linecap="round"/>
<path d="M437.2 281.55L441.2 281.55L441.2 282.72L438.7 290.35M446.24 282.72L445.24 281.55L443.24 281.55L442.24 283.02L442.24 288.88L443.24 290.35L445.24 290.35L446.24 288.88L446.24 286.83L445.24 285.51L443.24 285.51L442.24 286.83M450.28 290.35L450.28 281.55L447.28 287.71L451.28 287.71M466.4 281.84L463.4 281.55L462.4 283.02L462.4 288.88L463.4 290.35L466.4 290.06M473.08 286.39L475.88 286.39M486.56 281.84L483.56 281.55L482.56 283.02L482.56 288.88L483.56 290.35L486.56 290.06M488.6 283.31L490.6 283.31L491.6 284.78L491.6 288.88L490.6 290.35L488.6 290.35L487.6 288.88L487.6 284.78ZM492.64 290.35L492.64 283.31M492.64 284.78L493.64 283.31L495.64 283.31L496.64 284.78L496.64 290.35M499.48 281.55L499.48 289.47L500.08 290.35L501.08 290.35M498.28 283.31L500.88 283.31M503.72 283.31L505.72 283.31L506.72 284.78L506.72 288.88L505.72 290.35L503.72 290.35L502.72 288.88L502.72 284.78ZM508.26 290.35L508.26 283.31M508.26 284.78L509.26 283.31L511.26 283.31M512.8 290.35L512.8 283.31M512.8 284.78L513.8 283.31L515.8 283.31L516.8 284.78L516.8 290.35M518.84 283.31L520.84 283.31L521.84 284.78L521.84 288.88L520.84 290.35L518.84 290.35L517.84 288.88L517.84 284.78ZM527.92 283.02L528.92 281.55L530.92 281.55L531.92 283.02L531.92 284.48L530.92 285.8L529.52 285.8M530.92 285.8L531.92 287.27L531.92 288.88L530.92 290.35L528.92 290.35L527.92 288.88M532.96 281.55L536.96 281.55L536.96 282.72L534.46 290.35" fill="none" stroke="#3c3c3c" stroke-width="0.9" stroke-linejoin="round" stroke-linecap="round"/>
<line x1="386" y1="297.8" x2="425" y2="297.8" stroke="#0a0aa8" stroke-width="3" stroke-linecap="round"/>
<path d="M438.2 294.2L440.2 294.2L441.2 295.67L441.2 297.13L440.2 298.45L438.2 298.45L437.2 297.13L437.2 295.67ZM438.2 298.45L437.2 299.92L437.2 301.53L438.2 303L440.2 303L441.2 301.53L441.2 299.92L440.2 298.45M443.24 294.2L445.24 294.2L446.24 295.67L446.24 301.53L445.24 303L443.24 303L442.24 301.53L442.24 295.67ZM445.84 295.37L442.64 301.83M461.36 294.49L458.36 294.2L457.36 295.67L457.36 301.53L458.36 303L461.36 302.71M468.04 299.04L470.84 299.04M481.52 294.49L478.52 294.2L477.52 295.67L477.52 301.53L478.52 303L481.52 302.71M483.56 295.96L485.56 295.96L486.56 297.43L486.56 301.53L485.56 303L483.56 303L482.56 301.53L482.56 297.43ZM487.6 303L487.6 295.96M487.6 297.43L488.6 295.96L490.6 295.96L491.6 297.43L491.6 303M494.44 294.2L494.44 302.12L495.04 303L496.04 303M493.24 295.96L495.84 295.96M498.68 295.96L500.68 295.96L501.68 297.43L501.68 301.53L500.68 303L498.68 303L497.68 301.53L497.68 297.43ZM503.22 303L503.22 295.96M503.22 297.43L504.22 295.96L506.22 295.96M507.76 303L507.76 295.96M507.76 297.43L508.76 295.96L510.76 295.96L511.76 297.43L511.76 303M513.8 295.96L515.8 295.96L516.8 297.43L516.8 301.53L515.8 303L513.8 303L512.8 301.53L512.8 297.43ZM522.88 295.67L523.88 294.2L525.88 294.2L526.88 295.67L526.88 297.13L525.88 298.45L524.48 298.45M525.88 298.45L526.88 299.92L526.88 301.53L525.88 303L523.88 303L522.88 301.53M528.92 294.2L530.92 294.2L531.92 295.67L531.92 297.13L530.92 298.45L528.92 298.45L527.92 297.13L527.92 295.67ZM528.92 298.45L527.92 299.92L527.92 301.53L528.92 303L530.92 303L531.92 301.53L531.92 299.92L530.92 298.45" fill="none" stroke="#3c3c3c" stroke-width="0.9" stroke-linejoin="round" stroke-linecap="round"/>
<line x1="386" y1="310.45" x2="425" y2="310.45" stroke="#c01818" stroke-width="3" stroke-linecap="round"/>
<path d="M437.2 314.48L438.2 315.65L440.2 315.65L441.2 314.18L441.2 308.32L440.2 306.85L438.2 306.85L437.2 308.32L437.2 310.37L438.2 311.69L440.2 311.69L441.2 310.37M445.24 315.65L445.24 306.85L442.24 313.01L446.24 313.01M450.28 315.65L450.28 306.85L447.28 313.01L451.28 313.01M466.4 307.14L463.4 306.85L462.4 308.32L462.4 314.18L463.4 315.65L466.4 315.36" fill="none" stroke="#3c3c3c" stroke-width="0.9" stroke-linejoin="round" stroke-linecap="round"/>
<polygon points="44.5,371.5 550.5,371.5 550.5,462 524.5,437 524.5,416 359,416 359,436 333,461.5 333,569.5 306,586.5 289,586.5 263,569.5 263,461.5 237,436 237,416 71,416 71,436 44.5,461.5" fill="#108ae0"/>
<polygon points="263,461 333,461 333,569.5 306,586.5 289,586.5 263,569.5" fill="url(#stemg)"/>
<polygon points="44,463 71,437 71,417 237,417 237,437 263,462 263,569 291,586 291,590.5 10,590.5 44,570" fill="url(#beamg)" stroke="#08088a" stroke-width="0.8"/>
<polygon points="551,463 524,437 524,417 358,417 358,437 332,462 332,569 304,586 304,590.5 585,590.5 551,570" fill="url(#beamg)" stroke="#08088a" stroke-width="0.8"/>
<polygon points="44,463 71,437 71,417 237,417 237,437 263,462 263,569 291,586 291,590.5 10,590.5 44,570" fill="url(#grid)"/>
<polygon points="551,463 524,437 524,417 358,417 358,437 332,462 332,569 304,586 304,590.5 585,590.5 551,570" fill="url(#grid)"/>
<rect x="44" y="584.5" width="507" height="6" fill="#ee4a20"/>
<polygon points="10,590.5 44,570 44,590.5" fill="#e8502a"/>
<polygon points="585,590.5 551,570 551,590.5" fill="#e8502a"/>
<polygon points="75,420 97,420 97,449 75,449" fill="#fff" stroke="#08088a" stroke-width="1.3"/>
<polygon points="520,420 498,420 498,449 520,449" fill="#fff" stroke="#08088a" stroke-width="1.3"/>
<polygon points="102,420 150.5,420 150.5,449 102,449" fill="#fff" stroke="#08088a" stroke-width="1.3"/>
<polygon points="493,420 444.5,420 444.5,449 493,449" fill="#fff" stroke="#08088a" stroke-width="1.3"/>
<polygon points="156,420 204.5,420 204.5,449 156,449" fill="#fff" stroke="#08088a" stroke-width="1.3"/>
<polygon points="439,420 390.5,420 390.5,449 439,449" fill="#fff" stroke="#08088a" stroke-width="1.3"/>
<polygon points="209.5,420 232,420 232,449 209.5,449" fill="#fff" stroke="#08088a" stroke-width="1.3"/>
<polygon points="385.5,420 363,420 363,449 385.5,449" fill="#fff" stroke="#08088a" stroke-width="1.3"/>
<polygon points="49,478 73,454 97,454 97,517 49,517" fill="#fff" stroke="#08088a" stroke-width="1.3"/>
<polygon points="546,478 522,454 498,454 498,517 546,517" fill="#fff" stroke="#08088a" stroke-width="1.3"/>
<polygon points="102,454 150.5,454 150.5,517 102,517" fill="#fff" stroke="#08088a" stroke-width="1.3"/>
<polygon points="493,454 444.5,454 444.5,517 493,517" fill="#fff" stroke="#08088a" stroke-width="1.3"/>
<polygon points="156,454 204.5,454 204.5,517 156,517" fill="#fff" stroke="#08088a" stroke-width="1.3"/>
<polygon points="439,454 390.5,454 390.5,517 439,517" fill="#fff" stroke="#08088a" stroke-width="1.3"/>
<polygon points="209.5,454 234,454 258.5,478 258.5,517 209.5,517" fill="#fff" stroke="#08088a" stroke-width="1.3"/>
<polygon points="385.5,454 361,454 336.5,478 336.5,517 385.5,517" fill="#fff" stroke="#08088a" stroke-width="1.3"/>
<polygon points="49,522.5 97,522.5 97,584 55,584 49,572" fill="#fff" stroke="#08088a" stroke-width="1.3"/>
<polygon points="546,522.5 498,522.5 498,584 540,584 546,572" fill="#fff" stroke="#08088a" stroke-width="1.3"/>
<polygon points="102,522.5 150.5,522.5 150.5,533 127.5,584 102,584" fill="#fff" stroke="#08088a" stroke-width="1.3"/>
<polygon points="493,522.5 444.5,522.5 444.5,533 467.5,584 493,584" fill="#fff" stroke="#08088a" stroke-width="1.3"/>
<polygon points="150.5,542 150.5,584 133.5,584" fill="#fff" stroke="#08088a" stroke-width="1.3"/>
<polygon points="444.5,542 444.5,584 461.5,584" fill="#fff" stroke="#08088a" stroke-width="1.3"/>
<polygon points="156,542 173,584 156,584" fill="#fff" stroke="#08088a" stroke-width="1.3"/>
<polygon points="439,542 422,584 439,584" fill="#fff" stroke="#08088a" stroke-width="1.3"/>
<polygon points="156,522.5 204.5,522.5 204.5,584 179,584 156,533" fill="#fff" stroke="#08088a" stroke-width="1.3"/>
<polygon points="439,522.5 390.5,522.5 390.5,584 416,584 439,533" fill="#fff" stroke="#08088a" stroke-width="1.3"/>
<polygon points="209.5,522.5 258.5,522.5 258.5,572 252,584 209.5,584" fill="#fff" stroke="#08088a" stroke-width="1.3"/>
<polygon points="385.5,522.5 336.5,522.5 336.5,572 343,584 385.5,584" fill="#fff" stroke="#08088a" stroke-width="1.3"/>
<polygon points="68.5,442.8 47.8,465.3 49.9,470.3 70.7,447.8" fill="#fff" stroke="#08088a" stroke-width="1.3"/>
<polygon points="526.5,442.8 547.2,465.3 545.1,470.3 524.3,447.8" fill="#fff" stroke="#08088a" stroke-width="1.3"/>
<polygon points="28,584 43,575.5 47,584" fill="#fff" stroke="#08088a" stroke-width="1.3"/>
<polygon points="567,584 552,575.5 548,584" fill="#fff" stroke="#08088a" stroke-width="1.3"/>
<polygon points="256.5,585 262.3,574.4 280.2,585" fill="#fff" stroke="#08088a" stroke-width="1.3"/>
<polygon points="338.5,585 332.7,574.4 314.8,585" fill="#fff" stroke="#08088a" stroke-width="1.3"/>
<polygon points="238.5,442.8 259.2,465.3 257.1,470.3 236.3,447.8" fill="#fff" stroke="#08088a" stroke-width="1.3"/>
<polygon points="356.5,442.8 335.8,465.3 337.9,470.3 358.7,447.8" fill="#fff" stroke="#08088a" stroke-width="1.3"/>
<polygon points="44.5,371.5 550.5,371.5 550.5,462 524.5,437 524.5,416 359,416 359,436 333,461.5 333,569.5 306,586.5 289,586.5 263,569.5 263,461.5 237,436 237,416 71,416 71,436 44.5,461.5" fill="url(#grid)"/>
<polygon points="44.5,371.5 550.5,371.5 550.5,462 524.5,437 524.5,416 359,416 359,436 333,461.5 333,569.5 306,586.5 289,586.5 263,569.5 263,461.5 237,436 237,416 71,416 71,436 44.5,461.5" fill="none" stroke="#000" stroke-width="3.4" stroke-linejoin="miter"/>
<circle cx="114.5" cy="392.6" r="4.2" fill="none" stroke="#1a9a78" stroke-width="1.1"/>
<circle cx="206" cy="392.6" r="4.2" fill="none" stroke="#1a9a78" stroke-width="1.1"/>
<circle cx="296.5" cy="392.6" r="4.2" fill="none" stroke="#1a9a78" stroke-width="1.1"/>
<circle cx="389" cy="392.6" r="4.2" fill="none" stroke="#1a9a78" stroke-width="1.1"/>
<circle cx="481.5" cy="392.6" r="4.2" fill="none" stroke="#1a9a78" stroke-width="1.1"/>
<path d="M289 429.5H306M297.5 421V438" stroke="#8a5a6a" stroke-width="1"/>
<path d="M291 573.5L297.5 562.3L303.8 573.5" stroke="#ffb890" stroke-width="0.9" fill="none"/><path d="M297.5 562.3V596" stroke="#ffb890" stroke-width="0.8" stroke-opacity="0.6"/>
<path d="M32 356.55L33.5 354.45L33.5 364.95" fill="none" stroke="#5858a8" stroke-width="0.95" stroke-linejoin="round" stroke-linecap="round"/>
<path d="M555.2 356.5L556.45 354.75L558.95 354.75L560.2 356.5L560.2 358.6L555.2 365.25L560.2 365.25" fill="none" stroke="#5858a8" stroke-width="0.95" stroke-linejoin="round" stroke-linecap="round"/>
<path d="M556 479.5L557.25 477.75L559.75 477.75L561 479.5L561 481.25L559.75 482.82L558 482.82M559.75 482.82L561 484.57L561 486.5L559.75 488.25L557.25 488.25L556 486.5" fill="none" stroke="#5858a8" stroke-width="0.95" stroke-linejoin="round" stroke-linecap="round"/>
<path d="M26.5 479.35L28 477.25L28 487.75M32.95 477.25L35.45 477.25L36.7 479L36.7 480.75L35.45 482.32L32.95 482.32L31.7 480.75L31.7 479ZM32.95 482.32L31.7 484.07L31.7 486L32.95 487.75L35.45 487.75L36.7 486L36.7 484.07L35.45 482.32" fill="none" stroke="#5858a8" stroke-width="0.95" stroke-linejoin="round" stroke-linecap="round"/>
<path d="M75.5 423.45L77 421.35L77 431.85M85.7 422.75L84.45 421.35L81.95 421.35L80.7 423.1L80.7 430.1L81.95 431.85L84.45 431.85L85.7 430.1L85.7 427.65L84.45 426.08L81.95 426.08L80.7 427.65" fill="none" stroke="#5858a8" stroke-width="0.95" stroke-linejoin="round" stroke-linecap="round"/>
<path d="M75.5 440.85L77 438.75L77 449.25M80.7 438.75L85.7 438.75L85.7 440.15L82.58 449.25" fill="none" stroke="#5858a8" stroke-width="0.95" stroke-linejoin="round" stroke-linecap="round"/>
<path d="M219.5 423.85L221 421.75L221 432.25M229.7 421.75L225.07 421.75L224.7 426.3L228.45 426.3L229.7 428.05L229.7 430.5L228.45 432.25L225.95 432.25L224.7 430.5" fill="none" stroke="#5858a8" stroke-width="0.95" stroke-linejoin="round" stroke-linecap="round"/>
<path d="M219.5 440.85L221 438.75L221 449.25M228.45 449.25L228.45 438.75L224.7 446.1L229.7 446.1" fill="none" stroke="#5858a8" stroke-width="0.95" stroke-linejoin="round" stroke-linecap="round"/>
<path d="M246.5 469.15L248 467.05L248 477.55M251.7 468.8L252.95 467.05L255.45 467.05L256.7 468.8L256.7 470.55L255.45 472.12L253.7 472.12M255.45 472.12L256.7 473.88L256.7 475.8L255.45 477.55L252.95 477.55L251.7 475.8" fill="none" stroke="#5858a8" stroke-width="0.95" stroke-linejoin="round" stroke-linecap="round"/>
<path d="M246 575.55L247.5 573.45L247.5 583.95M251.2 575.2L252.45 573.45L254.95 573.45L256.2 575.2L256.2 577.3L251.2 583.95L256.2 583.95" fill="none" stroke="#5858a8" stroke-width="0.95" stroke-linejoin="round" stroke-linecap="round"/>
<path d="M277.4 594.15L278.9 592.05L278.9 602.55M283.6 594.15L285.1 592.05L285.1 602.55" fill="none" stroke="#5858a8" stroke-width="0.95" stroke-linejoin="round" stroke-linecap="round"/>
<path d="M307 594.15L308.5 592.05L308.5 602.55M313.45 592.05L315.95 592.05L317.2 593.8L317.2 600.8L315.95 602.55L313.45 602.55L312.2 600.8L312.2 593.8ZM316.7 593.45L312.7 601.15" fill="none" stroke="#5858a8" stroke-width="0.95" stroke-linejoin="round" stroke-linecap="round"/>
<path d="M338 582.15L339.25 583.55L341.75 583.55L343 581.8L343 574.8L341.75 573.05L339.25 573.05L338 574.8L338 577.25L339.25 578.82L341.75 578.82L343 577.25" fill="none" stroke="#5858a8" stroke-width="0.95" stroke-linejoin="round" stroke-linecap="round"/>
<path d="M338.25 465.25L340.75 465.25L342 467L342 468.75L340.75 470.32L338.25 470.32L337 468.75L337 467ZM338.25 470.32L337 472.07L337 474L338.25 475.75L340.75 475.75L342 474L342 472.07L340.75 470.32" fill="none" stroke="#5858a8" stroke-width="0.95" stroke-linejoin="round" stroke-linecap="round"/>
<path d="M363 439.25L368 439.25L368 440.65L364.88 449.75" fill="none" stroke="#5858a8" stroke-width="0.95" stroke-linejoin="round" stroke-linecap="round"/>
<path d="M368 422.65L366.75 421.25L364.25 421.25L363 423L363 430L364.25 431.75L366.75 431.75L368 430L368 427.55L366.75 425.98L364.25 425.98L363 427.55" fill="none" stroke="#5858a8" stroke-width="0.95" stroke-linejoin="round" stroke-linecap="round"/>
<path d="M517.3 421.25L512.67 421.25L512.3 425.8L516.05 425.8L517.3 427.55L517.3 430L516.05 431.75L513.55 431.75L512.3 430" fill="none" stroke="#5858a8" stroke-width="0.95" stroke-linejoin="round" stroke-linecap="round"/>
<path d="M516.25 449.85L516.25 439.35L512.5 446.7L517.5 446.7" fill="none" stroke="#5858a8" stroke-width="0.95" stroke-linejoin="round" stroke-linecap="round"/>
</svg>
<div id="rp" class="a"></div>
<div id="status" class="a"></div>
<div class="a" style="left:600px;top:37px;width:236px;height:11px;background:#fff"></div>
<div class="a" style="left:599px;top:36px;width:1px;height:11px;background:#6a6a6a"></div>
<div class="a" style="left:737px;top:46.5px;width:1px;height:1px;background:#909090"></div>
<div class="a" style="left:742.5px;top:46.5px;width:1px;height:1px;background:#909090"></div>
<div class="a" style="left:748px;top:46.5px;width:1px;height:1px;background:#909090"></div>
<div class="a" style="left:753.5px;top:46.5px;width:1px;height:1px;background:#909090"></div>
<div class="a" style="left:759px;top:46.5px;width:1px;height:1px;background:#909090"></div>
<div class="a" style="left:782px;top:46.5px;width:1px;height:1px;background:#909090"></div>
<div class="a" style="left:820px;top:46.5px;width:1px;height:1px;background:#909090"></div>
<div class="a" style="left:825.5px;top:46.5px;width:1px;height:1px;background:#909090"></div>
<div class="a" style="left:831px;top:46.5px;width:1px;height:1px;background:#909090"></div>
<div class="a" style="left:643px;top:46.5px;width:71px;height:1.5px;background:#8080d8"></div>
<div class="a" style="left:600px;top:48.5px;width:91px;height:87px;background:#e6f7e6;border-right:1px solid #d8d8d8;border-bottom:1px solid #c8c8c8"></div>
<div class="a gb" style="left:600.5px;top:53.5px;width:90.5px;height:81.5px"></div>
<div class="a gt" style="left:604.5px;top:49px;background:#e6f7e6">GESTIONE FINESTRA</div>
<div class="a tbx" style="left:604px;top:60.5px;width:83.5px;height:12px;background:#fff;color:#000;font-size:7.4px;padding-left:2px;line-height:9.5px">Sez_DXF 2</div>
<div class="a lb" style="left:604px;top:79px;transform-origin:left center;font-size:7.5px;transform:scaleX(0.9);color:#101010">Contorno:</div>
<div class="a tbx" style="left:641px;top:76px;width:46.5px;height:12.5px;background:#fff;color:#000;font-size:7.4px;padding-left:2px;line-height:9.5px">1</div>
<div class="a btn" style="left:676.5px;top:77.5px;width:10px;height:10px"><svg width="8" height="8" style="position:absolute;left:0.5px;top:0.5px"><path d="M1.5 3H6.5L4 5.5Z" fill="#000"/></svg></div>
<div class="a rd" style="left:606px;top:93.2px"></div>
<div class="a sb" style="left:616.5px;top:92.2px;transform-origin:left center;">SEZIONE</div>
<div class="a rd" style="left:606px;top:103.2px"></div>
<div class="a sb" style="left:616.5px;top:102.2px;transform-origin:left center;">MATERIALI</div>
<div class="a rd" style="left:606px;top:113.2px"><div style="position:absolute;left:2px;top:2px;width:2.5px;height:2.5px;background:#000;border-radius:1.5px"></div></div>
<div class="a sb" style="left:616.5px;top:112.2px;transform-origin:left center;">RISULTATI TERMICI</div>
<div class="a rd" style="left:606px;top:123.2px"></div>
<div class="a sb" style="left:616.5px;top:122.2px;transform-origin:left center;">RISULTATI MECCANICI</div>
<div class="a" style="left:615px;top:112.5px;width:45px;height:9px;border:1px dotted #555"></div>
<div class="a" style="left:694px;top:48.5px;width:142px;height:87.5px;background:#fffbc4;border-left:1px solid #c0c0c0"></div>
<div class="a gb" style="left:695.5px;top:53.5px;width:137.5px;height:81.5px"></div>
<div class="a gt" style="left:698.5px;top:49px;background:#fffbc4">VISUALIZZA</div>
<div class="a cb" style="left:701px;top:61px;background:#fff"><svg width="7" height="7" viewBox="0 0 7 7" style="position:absolute;left:0;top:0"><path d="M0.8 2.8L2.5 4.8L5.8 1" stroke="#000" stroke-width="1.6" fill="none"/></svg></div>
<div class="a sb" style="left:711.8px;top:60px;transform-origin:left center;">ESPOSIZIONE</div>
<div class="a cb" style="left:701px;top:70.95px;background:#fff"><svg width="7" height="7" viewBox="0 0 7 7" style="position:absolute;left:0;top:0"><path d="M0.8 2.8L2.5 4.8L5.8 1" stroke="#000" stroke-width="1.6" fill="none"/></svg></div>
<div class="a sb" style="left:711.8px;top:69.95px;transform-origin:left center;">MAPPA TERMICA</div>
<div class="a cb" style="left:701px;top:80.9px;background:#fff"></div>
<div class="a sb" style="left:711.8px;top:79.9px;transform-origin:left center;">TEMP. FERRI</div>
<div class="a cb" style="left:701px;top:90.85px;background:#fff"></div>
<div class="a sb" style="left:711.8px;top:89.85px;transform-origin:left center;">TEMP. NODI</div>
<div class="a cb" style="left:701px;top:100.8px;background:#fff"></div>
<div class="a sb" style="left:711.8px;top:99.8px;transform-origin:left center;">TEMP. INTERNE</div>
<div class="a cb" style="left:701px;top:110.75px;background:#e8e8e8"></div>
<div class="a sb" style="left:711.8px;top:109.75px;transform-origin:left center;color:#c0c0b0">INFO TEMPO</div>
<div class="a cb" style="left:701px;top:120.7px;background:#fff"><svg width="7" height="7" viewBox="0 0 7 7" style="position:absolute;left:0;top:0"><path d="M0.8 2.8L2.5 4.8L5.8 1" stroke="#000" stroke-width="1.6" fill="none"/></svg></div>
<div class="a sb" style="left:711.8px;top:119.7px;transform-origin:left center;">MESH</div>
<div class="a cb" style="left:766px;top:61px;background:#fff"></div>
<div class="a sb" style="left:776.8px;top:60px;transform-origin:left center;">ISOTERME</div>
<div class="a cb" style="left:766px;top:70.95px;background:#fff"></div>
<div class="a sb" style="left:776.8px;top:69.95px;transform-origin:left center;">NOMI NODI</div>
<div class="a cb" style="left:766px;top:80.9px;background:#fff"></div>
<div class="a sb" style="left:776.8px;top:79.9px;transform-origin:left center;">NOMI ELEMENTI</div>
<div class="a cb" style="left:766px;top:90.85px;background:#fff"><svg width="7" height="7" viewBox="0 0 7 7" style="position:absolute;left:0;top:0"><path d="M0.8 2.8L2.5 4.8L5.8 1" stroke="#000" stroke-width="1.6" fill="none"/></svg></div>
<div class="a sb" style="left:776.8px;top:89.85px;transform-origin:left center;">MINICAD</div>
<div class="a cb" style="left:766px;top:100.8px;background:#e8e8e8"><svg width="7" height="7" viewBox="0 0 7 7" style="position:absolute;left:0;top:0"><path d="M0.8 2.8L2.5 4.8L5.8 1" stroke="#a0a0a0" stroke-width="1.6" fill="none"/></svg></div>
<div class="a sb" style="left:776.8px;top:99.8px;transform-origin:left center;color:#c0c0b0">INFO SEZIONE</div>
<div class="a cb" style="left:766px;top:110.75px;background:#e8e8e8"></div>
<div class="a sb" style="left:776.8px;top:109.75px;transform-origin:left center;color:#c0c0b0">COPR. INT.</div>
<div class="a cb" style="left:766px;top:120.7px;background:#e8e8e8"></div>
<div class="a sb" style="left:776.8px;top:119.7px;transform-origin:left center;color:#c0c0b0">COPR.EST.</div>
<div class="a tbx" style="left:808.5px;top:113px;width:15.5px;height:11.5px;background:#fff;color:#2020c0;font-size:9px;padding-left:2px;line-height:9.5px">3</div>
<div class="a" style="left:600px;top:136.5px;width:236px;height:47.5px;background:#c2f5f9;border-bottom:1px solid #e0e0e0"></div>
<div class="a gb" style="left:601px;top:141px;width:232px;height:42px"></div>
<div class="a gt" style="left:604.5px;top:136.5px;background:#c2f5f9">PANNELLI</div>
<div class="a cb" style="left:607.5px;top:147.3px;background:#fff"><svg width="7" height="7" viewBox="0 0 7 7" style="position:absolute;left:0;top:0"><path d="M0.8 2.8L2.5 4.8L5.8 1" stroke="#000" stroke-width="1.6" fill="none"/></svg></div>
<div class="a sb" style="left:619px;top:146.3px;transform-origin:left center;color:#101010">CALCOLO T.</div>
<div class="a cb" style="left:657px;top:147.3px;background:#fff"><svg width="7" height="7" viewBox="0 0 7 7" style="position:absolute;left:0;top:0"><path d="M0.8 2.8L2.5 4.8L5.8 1" stroke="#000" stroke-width="1.6" fill="none"/></svg></div>
<div class="a sb" style="left:668px;top:146.3px;transform-origin:left center;color:#101010">TIPI DI ESP.</div>
<div class="a cb" style="left:704.5px;top:147.3px;background:#fff"><svg width="7" height="7" viewBox="0 0 7 7" style="position:absolute;left:0;top:0"><path d="M0.8 2.8L2.5 4.8L5.8 1" stroke="#000" stroke-width="1.6" fill="none"/></svg></div>
<div class="a sb" style="left:714.5px;top:146.3px;transform-origin:left center;color:#101010">MT-TEMPO</div>
<div class="a cb" style="left:607.5px;top:158.9px;background:#fff"></div>
<div class="a sb" style="left:619px;top:157.9px;transform-origin:left center;color:#101010">SOLLEC.</div>
<div class="a cb" style="left:657px;top:158.9px;background:#fff"></div>
<div class="a sb" style="left:668px;top:157.9px;transform-origin:left center;color:#101010">OPZ RIS MEC</div>
<div class="a cb" style="left:607.5px;top:170.5px;background:#fff"></div>
<div class="a sb" style="left:619px;top:169.5px;transform-origin:left center;color:#101010">INFO RIS.</div>
<div class="a cb" style="left:657px;top:170.5px;background:#fff"></div>
<div class="a sb" style="left:668px;top:169.5px;transform-origin:left center;color:#101010">SERVIZIO</div>
<div class="a lb" style="right:23px;top:144px;transform-origin:right center;font-size:7.5px;transform:scaleX(0.9);color:#101010">Nro el.finiti :</div>
<div class="a lb" style="right:23px;top:156.5px;transform-origin:right center;font-size:7.5px;transform:scaleX(0.9);color:#101010">Mappe memorizzate :</div>
<div class="a tbx" style="left:815.5px;top:143.3px;width:16px;height:11.2px;background:#fff;color:#000;font-size:7.4px;padding-left:2px;line-height:9px">113</div>
<div class="a tbx" style="left:815.5px;top:155.8px;width:16px;height:11.2px;background:#ececec;color:#000;font-size:7.4px;padding-left:2px;line-height:9px">5</div>
<div class="a btn" style="left:788.5px;top:169px;width:12.5px;height:12px"></div>
<div class="a btn" style="left:803.2px;top:169px;width:12.5px;height:12px"></div>
<div class="a btn" style="left:819px;top:169px;width:12.5px;height:12px"></div>
<svg class="a" style="left:790px;top:170.5px" width="10" height="9"><circle cx="5" cy="4.5" r="4" fill="#fff" stroke="#333" stroke-width="1"/><path d="M2 7.5L8 1.5V7.5Z" fill="#333"/></svg>
<svg class="a" style="left:804.5px;top:171px" width="10" height="8"><rect x="0.5" y="2" width="9" height="5.5" rx="1" fill="#333"/><rect x="3" y="0.5" width="4" height="2" fill="#333"/><circle cx="5" cy="4.8" r="2" fill="#ccc"/></svg>
<svg class="a" style="left:820.5px;top:171px" width="10" height="8"><rect x="0" y="0" width="10" height="8" fill="#fff0f0"/><path d="M0.5 6L3 3L5 5L7 2.5L9.5 5" stroke="#d06060" stroke-width="1" fill="none"/></svg>
<div class="a" style="left:600px;top:188px;width:236px;height:61.5px;background:#fcc68e;border-top:1px solid #fff;border-bottom:1px solid #e8c8a0"></div>
<div class="a gb" style="left:601px;top:194.8px;width:231.5px;height:53.7px"></div>
<div class="a gt" style="left:604.5px;top:190.3px;background:#fcc68e">CALCOLO TERMICO</div>
<div class="a btn" style="left:825px;top:196px;width:9px;height:5px;line-height:3px;"></div>
<svg class="a" style="left:827px;top:197px" width="6" height="4"><path d="M0.5 3.5H5.5L3 0.5Z" fill="#000"/></svg>
<div class="a btn" style="left:606.8px;top:201.8px;width:48px;height:14.6px;line-height:12.6px;font-size:7px;color:#101010">Genera mesh</div>
<div class="a btn" style="left:606.8px;top:217.6px;width:48px;height:14.4px;line-height:12.4px;font-size:7px;color:#101010">Brucia</div>
<div class="a lb" style="left:660px;top:204.2px;transform-origin:left center;font-size:7.5px;transform:scaleX(0.9);color:#101010">Mappe ogni (min) :</div>
<div class="a lb" style="left:660px;top:219px;transform-origin:left center;font-size:7.5px;transform:scaleX(0.9);color:#101010">Numero mappe :</div>
<div class="a tbx" style="left:717.5px;top:202.8px;width:20.5px;height:11.7px;background:#fff;color:#000;font-size:7.4px;padding-left:2px;line-height:9.5px">15</div>
<div class="a tbx" style="left:717.5px;top:218.5px;width:20.5px;height:11.7px;background:#fff;color:#000;font-size:7.4px;padding-left:2px;line-height:9.5px">4</div>
<div class="a lb" style="left:747px;top:203.4px;transform-origin:left center;font-size:7.5px;transform:scaleX(0.9);color:#101010">Dt calc.:</div>
<div class="a lb" style="left:747px;top:219.2px;transform-origin:left center;font-size:7.5px;transform:scaleX(0.9);color:#101010">Dt trian.:</div>
<div class="a btn" style="left:773.3px;top:202.5px;width:8.5px;height:12px;line-height:10px;font-size:9px">-</div>
<div class="a tbx" style="left:783px;top:202.8px;width:17px;height:11.4px;background:#fff;color:#000;font-size:7.4px;padding-left:2px;line-height:9.5px">10</div>
<div class="a btn" style="left:800.4px;top:202.5px;width:8.6px;height:12px;line-height:10px;font-size:7px;font-weight:bold">+</div>
<div class="a btn" style="left:773.3px;top:218.2px;width:8.5px;height:12px;line-height:10px;font-size:9px">-</div>
<div class="a tbx" style="left:783px;top:218.5px;width:17px;height:11.4px;background:#fff;color:#000;font-size:7.4px;padding-left:2px;line-height:9.5px">100</div>
<div class="a btn" style="left:800.4px;top:218.2px;width:8.6px;height:12px;line-height:10px;font-size:7px;font-weight:bold">+</div>
<div class="a btn" style="left:811px;top:210.6px;width:9.2px;height:11.4px;line-height:9.4px;font-size:7px;color:#3050a0">&lt;</div>
<div class="a btn" style="left:790.6px;top:235.5px;width:13.8px;height:9.9px;line-height:7.9px;font-size:8px;font-weight:bold;color:#304050">R</div>
<div class="a cb" style="left:608px;top:236.5px;background:#fff"></div>
<div class="a sb" style="left:619px;top:235.5px;transform-origin:left center;color:#101010">CHECK DATABASE</div>
<div class="a" style="left:600px;top:250.2px;width:236px;height:93.6px;background:#fffbc4;border-bottom:1px solid #d8d8c0"></div>
<div class="a gb" style="left:601px;top:256.5px;width:232.5px;height:86.5px"></div>
<div class="a gt" style="left:605px;top:252px;background:#fffbc4">TIPI DI ESPOSIZIONE</div>
<div class="a btn" style="left:825px;top:258px;width:9px;height:5px;line-height:3px;"></div>
<svg class="a" style="left:827px;top:259px" width="6" height="4"><path d="M0.5 3.5H5.5L3 0.5Z" fill="#000"/></svg>
<div class="a lb" style="left:658.8px;top:260.8px;transform-origin:left center;font-size:7.5px;transform:scaleX(0.9);color:#222">Nome</div>
<div class="a lb" style="left:711.4px;top:261.3px;transform-origin:left center;font-size:7.5px;transform:scaleX(0.9);color:#222">Col</div>
<div class="a rd" style="left:607.5px;top:276px"><div style="position:absolute;left:2px;top:2px;width:2.5px;height:2.5px;background:#000;border-radius:1.5px"></div></div>
<div class="a lb" style="left:622px;top:275px;transform-origin:left center;font-size:7.4px;color:#111">1</div>
<div class="a tbx" style="left:632.2px;top:273.4px;width:71.8px;height:12.2px;background:#ececec;color:#000;font-size:7.4px;padding-left:2px;line-height:9.5px;border-color:#a0a0a0 #fff #fff #a0a0a0">Fuoco</div>
<div class="a" style="left:709.8px;top:273.6px;width:14.6px;height:10.6px;background:#ff0000;border:1px solid #c8c8c8"></div>
<div class="a rd" style="left:607.5px;top:289.42px"></div>
<div class="a lb" style="left:622px;top:288.42px;transform-origin:left center;font-size:7.4px;color:#111">2</div>
<div class="a tbx" style="left:632.2px;top:286.82px;width:71.8px;height:12.2px;background:#ececec;color:#000;font-size:7.4px;padding-left:2px;line-height:9.5px;border-color:#a0a0a0 #fff #fff #a0a0a0">Fuoco esterno</div>
<div class="a" style="left:709.8px;top:287.02px;width:14.6px;height:10.6px;background:#ffff00;border:1px solid #c8c8c8"></div>
<div class="a rd" style="left:607.5px;top:302.84px"></div>
<div class="a lb" style="left:622px;top:301.84px;transform-origin:left center;font-size:7.4px;color:#111">3</div>
<div class="a tbx" style="left:632.2px;top:300.24px;width:71.8px;height:12.2px;background:#ececec;color:#000;font-size:7.4px;padding-left:2px;line-height:9.5px;border-color:#a0a0a0 #fff #fff #a0a0a0">Fuoco idrocarburi</div>
<div class="a" style="left:709.8px;top:300.44px;width:14.6px;height:10.6px;background:#00e000;border:1px solid #c8c8c8"></div>
<div class="a rd" style="left:607.5px;top:316.26px"></div>
<div class="a lb" style="left:622px;top:315.26px;transform-origin:left center;font-size:7.4px;color:#111">4</div>
<div class="a tbx" style="left:632.2px;top:313.66px;width:71.8px;height:12.2px;background:#ececec;color:#000;font-size:7.4px;padding-left:2px;line-height:9.5px;border-color:#a0a0a0 #fff #fff #a0a0a0">Aria 20&#176;</div>
<div class="a" style="left:709.8px;top:313.86px;width:14.6px;height:10.6px;background:#00f0f8;border:1px solid #c8c8c8"></div>
<div class="a rd" style="left:607.5px;top:329.68px"></div>
<div class="a lb" style="left:622px;top:328.68px;transform-origin:left center;font-size:7.4px;color:#111">5</div>
<div class="a tbx" style="left:632.2px;top:327.08px;width:71.8px;height:12.2px;background:#ececec;color:#000;font-size:7.4px;padding-left:2px;line-height:9.5px;border-color:#a0a0a0 #fff #fff #a0a0a0">Vuoti interni</div>
<div class="a" style="left:709.8px;top:327.28px;width:14.6px;height:10.6px;background:#0000e8;border:1px solid #c8c8c8"></div>
<div class="a lb" style="left:762.6px;top:275px;transform-origin:left center;font-size:7.5px;transform:scaleX(0.9);color:#222">Numero tipi :</div>
<div class="a lb" style="left:811px;top:275px;transform-origin:left center;font-size:7.5px;transform:scaleX(0.9);color:#222">5</div>
<div class="a btn" style="left:762.6px;top:288.2px;width:30.9px;height:11.4px;line-height:9.4px;font-size:7px;color:#101010">LISTA</div>
<div class="a" style="left:600px;top:346px;width:236px;height:45.5px;border-top:1px solid #fff;border-bottom:1px solid #c8c8c8"></div>
<div class="a gb" style="left:601px;top:349.4px;width:232.5px;height:41.4px"></div>
<div class="a gt" style="left:604.5px;top:344.9px;background:#f0f0f0">MAPPE TERMICHE - TEMPO</div>
<div class="a btn" style="left:826.5px;top:351.5px;width:8.5px;height:5px;line-height:3px;"></div>
<svg class="a" style="left:828px;top:352.5px" width="6" height="4"><path d="M0.5 3.5H5.5L3 0.5Z" fill="#000"/></svg>
<div class="a" style="left:608.5px;top:355.5px;width:124px;height:22px;border:1px solid #a0a0a0;border-right-color:#707070;border-bottom-color:#707070"></div>
<div class="a" style="left:614px;top:362px;width:114px;height:2px;background:#909090;border-bottom:1px solid #fff"></div>
<div class="a" style="left:618px;top:371.5px;width:1px;height:2px;background:#555"></div>
<div class="a" style="left:644px;top:371.5px;width:1px;height:2px;background:#555"></div>
<div class="a" style="left:671px;top:371.5px;width:1px;height:2px;background:#555"></div>
<div class="a" style="left:697px;top:371.5px;width:1px;height:2px;background:#555"></div>
<svg class="a" style="left:722px;top:356px" width="8" height="17"><path d="M3.5 0.5V12L1 15" stroke="#444" stroke-width="1" fill="none"/><path d="M4.5 1V12" stroke="#fff" stroke-width="1"/></svg>
<div class="a mb" style="left:614.5px;top:377.8px;transform-origin:left center;">0</div>
<div class="a mb" style="left:718px;top:377.8px;transform-origin:left center;">60</div>
<div class="a mb" style="left:732.5px;top:378.3px;transform-origin:left center;font-size:7px">min</div>
<div class="a lb" style="left:747px;top:355.9px;transform-origin:left center;font-size:7.5px;transform:scaleX(0.9);color:#222">Tempo [sec.]</div>
<div class="a lb" style="left:796px;top:355.9px;transform-origin:left center;font-size:7.5px;transform:scaleX(0.9);color:#222">3600</div>
<div class="a btn" style="left:765px;top:372px;width:46.6px;height:12.5px;line-height:10.5px;font-size:8px;color:#b0b0b0">Interrompi</div>
<div class="a" style="right:0.5px;top:640px;font-size:8.6px;line-height:10px;transform:scaleX(0.86);transform-origin:right center;color:#111;white-space:nowrap;-webkit-text-stroke:0.1px #111">Z=13.02 Y= 7.57</div>
</body></html>
